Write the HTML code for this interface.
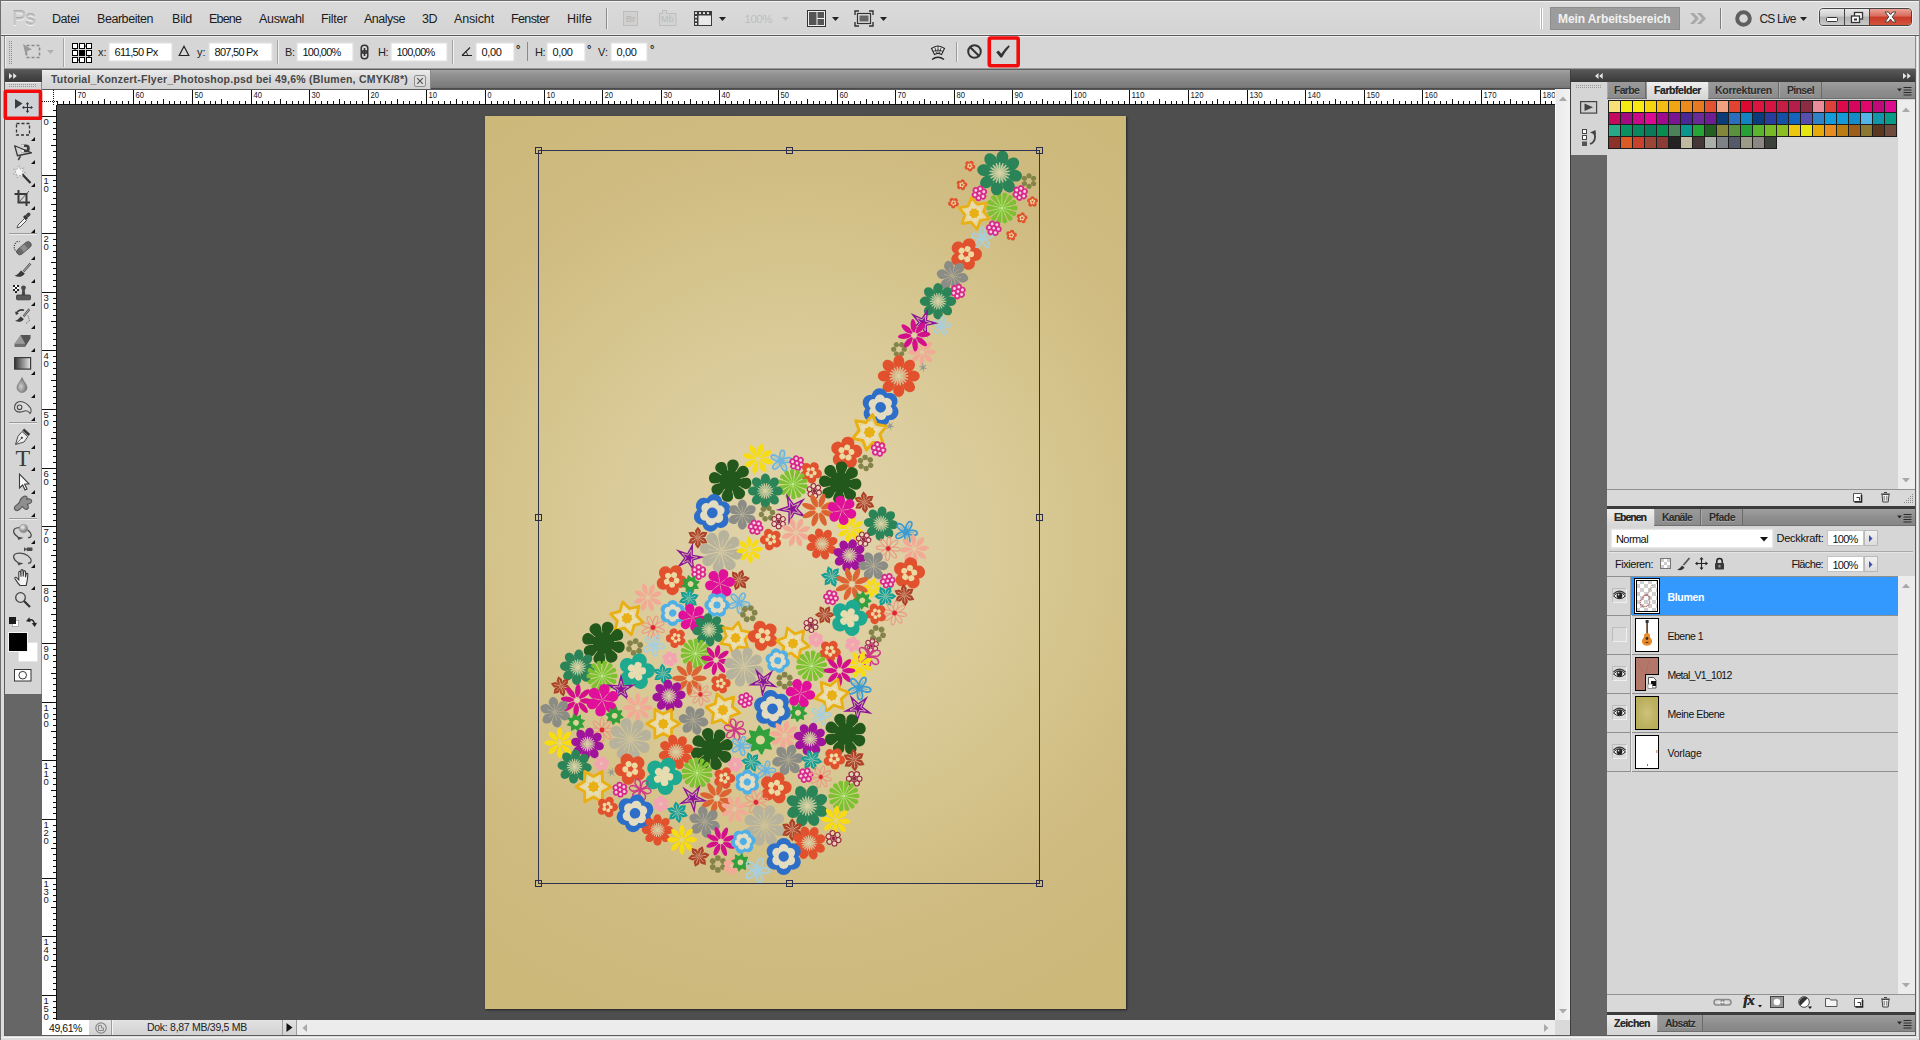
<!DOCTYPE html>
<html lang="de"><head><meta charset="utf-8"><title>Tutorial_Konzert-Flyer_Photoshop.psd</title>
<style>
html,body{margin:0;padding:0}
body{width:1920px;height:1040px;overflow:hidden;position:relative;background:#d6d6d6;font-family:"Liberation Sans",sans-serif}
body div,body svg,body span.t{position:absolute;display:block}
span.t{white-space:nowrap}
svg{overflow:visible}
</style></head><body>
<!-- chrome -->
<div style="left:0px;top:0px;width:1920px;height:1px;background:#6e6e6e"></div>
<div style="left:0px;top:1px;width:1920px;height:1px;background:#f2f2f2"></div>
<div style="left:1px;top:2px;width:1918px;height:32px;background:linear-gradient(#dadada,#d4d4d4)"></div>
<div style="left:0px;top:34px;width:1920px;height:1px;background:#e9e9e9"></div>
<div style="left:0px;top:35px;width:1920px;height:1px;background:#5a5a5a"></div>
<span class="t" style="left:12.00px;top:-2.78px;font-size:21px;line-height:42px;color:#c3c3c3;letter-spacing:-0.753px;text-shadow:0 1px 0 #f4f4f4,0 -1px 0 #a9a9a9;">Ps</span>
<span class="t" style="left:52.00px;top:6.97px;font-size:12.5px;line-height:25px;color:#1c1c1c;letter-spacing:-0.436px;">Datei</span>
<span class="t" style="left:97.00px;top:6.97px;font-size:12.5px;line-height:25px;color:#1c1c1c;letter-spacing:-0.446px;">Bearbeiten</span>
<span class="t" style="left:172.00px;top:6.97px;font-size:12.5px;line-height:25px;color:#1c1c1c;letter-spacing:-0.211px;">Bild</span>
<span class="t" style="left:209.00px;top:6.97px;font-size:12.5px;line-height:25px;color:#1c1c1c;letter-spacing:-0.829px;">Ebene</span>
<span class="t" style="left:259.00px;top:6.97px;font-size:12.5px;line-height:25px;color:#1c1c1c;letter-spacing:-0.321px;">Auswahl</span>
<span class="t" style="left:321.00px;top:6.97px;font-size:12.5px;line-height:25px;color:#1c1c1c;letter-spacing:-0.296px;">Filter</span>
<span class="t" style="left:364.00px;top:6.97px;font-size:12.5px;line-height:25px;color:#1c1c1c;letter-spacing:-0.496px;">Analyse</span>
<span class="t" style="left:422.00px;top:6.97px;font-size:12.5px;line-height:25px;color:#1c1c1c;letter-spacing:-0.490px;">3D</span>
<span class="t" style="left:454.00px;top:6.97px;font-size:12.5px;line-height:25px;color:#1c1c1c;letter-spacing:-0.142px;">Ansicht</span>
<span class="t" style="left:511.00px;top:6.97px;font-size:12.5px;line-height:25px;color:#1c1c1c;letter-spacing:-0.625px;">Fenster</span>
<span class="t" style="left:567.00px;top:6.97px;font-size:12.5px;line-height:25px;color:#1c1c1c;letter-spacing:-0.001px;">Hilfe</span>
<div style="left:606px;top:8px;width:1px;height:21px;background:#8a8a8a"></div>
<div style="left:607px;top:8px;width:1px;height:21px;background:#efefef"></div>
<div style="left:623px;top:11px;width:15px;height:15px;border:1px solid #bdbdbd;background:#d0d0d0;box-sizing:border-box"></div>
<span class="t" style="left:626.00px;top:11.05px;font-size:8.5px;line-height:17px;color:#b9b9b9;font-weight:bold;letter-spacing:-0.223px;">Br</span>
<svg style="left:658px;top:9px;" width="20" height="18" viewBox="0 0 20 18"><path d="M1.5 16.5V4.5h3v-3h4v3h9.5v12z" fill="#d3d3d3" stroke="#bdbdbd"/></svg>
<span class="t" style="left:661.00px;top:10.38px;font-size:9px;line-height:18px;color:#b9b9b9;letter-spacing:0.249px;">Mb</span>
<svg style="left:693px;top:10px;" width="20" height="17" viewBox="0 0 20 17"><rect x="1" y="1" width="18" height="15" fill="#3a3a3a"/><rect x="5.5" y="5.5" width="12.5" height="9.5" fill="#e9e9e9"/><g fill="#e9e9e9"><rect x="2" y="2.2" width="2" height="1.8"/><rect x="6" y="2.2" width="2" height="1.8"/><rect x="10" y="2.2" width="2" height="1.8"/><rect x="14" y="2.2" width="2" height="1.8"/><rect x="2" y="6" width="2" height="1.8"/><rect x="2" y="9.5" width="2" height="1.8"/><rect x="2" y="13" width="2" height="1.8"/></g></svg>
<svg style="left:719px;top:16.5px;" width="7" height="4" viewBox="0 0 7 4"><path d="M0 0h7 l-3.5 4z" fill="#222"/></svg>
<span class="t" style="left:744.50px;top:7.52px;font-size:11.5px;line-height:23px;color:#bdbdbd;letter-spacing:-0.478px;">100%</span>
<svg style="left:782px;top:16.5px;" width="7" height="4" viewBox="0 0 7 4"><path d="M0 0h7 l-3.5 4z" fill="#bdbdbd"/></svg>
<svg style="left:807px;top:10px;" width="19" height="17" viewBox="0 0 19 17"><rect x="0.5" y="0.5" width="18" height="16" fill="#f0f0f0" stroke="#333"/><rect x="2" y="2" width="7.5" height="13" fill="#555"/><rect x="10.5" y="2" width="6.5" height="6" fill="#555"/><rect x="10.5" y="9" width="6.5" height="6" fill="#555"/></svg>
<svg style="left:831.5px;top:16.5px;" width="7" height="4" viewBox="0 0 7 4"><path d="M0 0h7 l-3.5 4z" fill="#222"/></svg>
<svg style="left:854px;top:10px;" width="20" height="17" viewBox="0 0 20 17"><path d="M1 5V1h4M15 1h4v4M19 12v4h-4M5 16H1v-4" fill="none" stroke="#333" stroke-width="1.4"/><rect x="3.5" y="3.5" width="13" height="10" fill="#e0e0e0" stroke="#333" stroke-width="1.2"/><rect x="5.5" y="5.5" width="9" height="6" fill="#666"/></svg>
<svg style="left:879.5px;top:16.5px;" width="7" height="4" viewBox="0 0 7 4"><path d="M0 0h7 l-3.5 4z" fill="#222"/></svg>
<div style="left:1540px;top:8px;width:1px;height:21px;background:#fff"></div>
<div style="left:1542px;top:8px;width:1px;height:21px;background:#fff"></div>
<div style="left:1541px;top:8px;width:1px;height:21px;background:#b5b5b5"></div>
<div style="left:1550px;top:7px;width:130px;height:23px;background:#9c9c9c;border:1px solid #8c8c8c;box-sizing:border-box"></div>
<span class="t" style="left:1558.00px;top:6.84px;font-size:12px;line-height:24px;color:#f1f1f1;font-weight:bold;letter-spacing:-0.092px;">Mein Arbeitsbereich</span>
<svg style="left:1689px;top:12px;" width="18" height="13" viewBox="0 0 18 13"><path d="M1 1h4l5 5.5-5 5.5H1l5-5.5zM8 1h4l5 5.5-5 5.5H8l5-5.5z" fill="#a9a9a9"/></svg>
<div style="left:1720px;top:8px;width:1px;height:21px;background:#7d7d7d"></div>
<div style="left:1721px;top:8px;width:1px;height:21px;background:#efefef"></div>
<svg style="left:1734px;top:9px;" width="19" height="19" viewBox="0 0 19 19"><circle cx="9.5" cy="9.5" r="6.3" fill="none" stroke="#5e5e5e" stroke-width="4"/></svg>
<span class="t" style="left:1759.50px;top:6.84px;font-size:12px;line-height:24px;color:#222;letter-spacing:-0.860px;">CS Live</span>
<svg style="left:1800px;top:17px;" width="7" height="4" viewBox="0 0 7 4"><path d="M0 0h7 l-3.5 4z" fill="#222"/></svg>
<div style="left:1819px;top:8px;width:93px;height:18px;border-radius:4px;border:1px solid #454545;box-sizing:border-box;overflow:hidden;box-shadow:0 0 0 1px rgba(255,255,255,.55)"><div style="left:0;top:0;width:24px;height:16px;background:linear-gradient(#e8e8e8,#cfcfcf 45%,#b2b2b2 50%,#c9c9c9)"></div><div style="left:24px;top:0;width:1px;height:16px;background:#454545"></div><div style="left:25px;top:0;width:24px;height:16px;background:linear-gradient(#e8e8e8,#cfcfcf 45%,#b2b2b2 50%,#c9c9c9)"></div><div style="left:49px;top:0;width:1px;height:16px;background:#454545"></div><div style="left:50px;top:0;width:42px;height:16px;background:linear-gradient(#e9a396,#d9695a 45%,#c73a26 50%,#d4553f)"></div></div>
<svg style="left:1826px;top:17px;" width="12" height="6" viewBox="0 0 12 6"><rect x="0.5" y="0.5" width="11" height="4" rx="1" fill="#fff" stroke="#333"/></svg>
<svg style="left:1850px;top:11px;" width="14" height="13" viewBox="0 0 14 13"><rect x="4.5" y="1.5" width="8" height="6.5" fill="#fff" stroke="#333" stroke-width="1.3"/><rect x="1.5" y="5" width="8" height="6.5" fill="#fff" stroke="#333" stroke-width="1.3"/><rect x="4" y="7.5" width="3" height="2" fill="#333"/></svg>
<svg style="left:1884px;top:11px;" width="13" height="12" viewBox="0 0 13 12"><path d="M1 1h3.3l2.2 2.8L8.7 1H12L8.2 5.8 12 11H8.7L6.5 8 4.3 11H1l3.8-5.2z" fill="#fff" stroke="#444" stroke-width="1"/></svg>
<div style="left:1px;top:36px;width:1918px;height:33px;background:#d6d6d6"></div>
<div style="left:4px;top:36px;width:1px;height:33px;background:#8e8e8e"></div>
<div style="left:5px;top:36px;width:1911px;height:1px;background:#f0f0f0"></div>
<div style="left:5px;top:37px;width:1px;height:31px;background:#f0f0f0"></div>
<div style="left:1915px;top:36px;width:1px;height:33px;background:#8e8e8e"></div>
<div style="left:4px;top:68px;width:1912px;height:1px;background:#9a9a9a"></div>
<svg style="left:9px;top:41px;" width="4" height="24" viewBox="0 0 4 24"><rect x="0" y="0" width="1" height="1" fill="#8d8d8d"/><rect x="2" y="0" width="1" height="1" fill="#8d8d8d"/><rect x="0" y="2" width="1" height="1" fill="#8d8d8d"/><rect x="2" y="2" width="1" height="1" fill="#8d8d8d"/><rect x="0" y="4" width="1" height="1" fill="#8d8d8d"/><rect x="2" y="4" width="1" height="1" fill="#8d8d8d"/><rect x="0" y="6" width="1" height="1" fill="#8d8d8d"/><rect x="2" y="6" width="1" height="1" fill="#8d8d8d"/><rect x="0" y="8" width="1" height="1" fill="#8d8d8d"/><rect x="2" y="8" width="1" height="1" fill="#8d8d8d"/><rect x="0" y="10" width="1" height="1" fill="#8d8d8d"/><rect x="2" y="10" width="1" height="1" fill="#8d8d8d"/><rect x="0" y="12" width="1" height="1" fill="#8d8d8d"/><rect x="2" y="12" width="1" height="1" fill="#8d8d8d"/><rect x="0" y="14" width="1" height="1" fill="#8d8d8d"/><rect x="2" y="14" width="1" height="1" fill="#8d8d8d"/><rect x="0" y="16" width="1" height="1" fill="#8d8d8d"/><rect x="2" y="16" width="1" height="1" fill="#8d8d8d"/><rect x="0" y="18" width="1" height="1" fill="#8d8d8d"/><rect x="2" y="18" width="1" height="1" fill="#8d8d8d"/><rect x="0" y="20" width="1" height="1" fill="#8d8d8d"/><rect x="2" y="20" width="1" height="1" fill="#8d8d8d"/><rect x="0" y="22" width="1" height="1" fill="#8d8d8d"/><rect x="2" y="22" width="1" height="1" fill="#8d8d8d"/></svg>
<svg style="left:22px;top:43px;" width="20" height="18" viewBox="0 0 20 18"><rect x="4.5" y="2.5" width="13" height="12" fill="none" stroke="#8a8a8a" stroke-width="1.6" stroke-dasharray="3 2"/><path d="M1 1l9 5.5-4.2 1.2L3.5 12z" fill="#9a9a9a"/></svg>
<svg style="left:47px;top:50px;" width="7" height="4" viewBox="0 0 7 4"><path d="M0 0h7 l-3.5 4z" fill="#b0b0b0"/></svg>
<div style="left:63px;top:38px;width:1px;height:29px;background:#a4a4a4"></div>
<div style="left:64px;top:38px;width:1px;height:29px;background:#f0f0f0"></div>
<svg style="left:72px;top:43px;" width="20" height="20" viewBox="0 0 20 20"><path d="M3 3h14v14H3z" fill="none" stroke="#000" stroke-width="1" stroke-dasharray="1 1"/><rect x="0.5" y="0.5" width="5" height="5" fill="#fff" stroke="#000"/><rect x="7.5" y="0.5" width="5" height="5" fill="#fff" stroke="#000"/><rect x="14.5" y="0.5" width="5" height="5" fill="#fff" stroke="#000"/><rect x="0.5" y="7.5" width="5" height="5" fill="#fff" stroke="#000"/><rect x="7.5" y="7.5" width="5" height="5" fill="#000" stroke="#000"/><rect x="14.5" y="7.5" width="5" height="5" fill="#fff" stroke="#000"/><rect x="0.5" y="14.5" width="5" height="5" fill="#fff" stroke="#000"/><rect x="7.5" y="14.5" width="5" height="5" fill="#fff" stroke="#000"/><rect x="14.5" y="14.5" width="5" height="5" fill="#fff" stroke="#000"/></svg>
<span class="t" style="left:98.00px;top:41.19px;font-size:11px;line-height:22px;color:#222;letter-spacing:-0.028px;">x:</span>
<div style="left:110px;top:44px;width:61px;height:16px;background:#fff;box-shadow:0 0 1.5px 1px #f4f4f4"></div><span class="t" style="left:114.50px;top:41.19px;font-size:11px;line-height:22px;color:#111;letter-spacing:-0.636px;">611,50 Px</span>
<svg style="left:178px;top:45px;" width="12" height="12" viewBox="0 0 12 12"><path d="M6 1.2L10.8 10.5H1.2z" fill="none" stroke="#222" stroke-width="1.2"/></svg>
<span class="t" style="left:197.00px;top:41.19px;font-size:11px;line-height:22px;color:#222;letter-spacing:-0.028px;">y:</span>
<div style="left:210px;top:44px;width:61px;height:16px;background:#fff;box-shadow:0 0 1.5px 1px #f4f4f4"></div><span class="t" style="left:214.50px;top:41.19px;font-size:11px;line-height:22px;color:#111;letter-spacing:-0.726px;">807,50 Px</span>
<div style="left:277px;top:40px;width:1px;height:24px;background:#a4a4a4"></div>
<div style="left:278px;top:40px;width:1px;height:24px;background:#f0f0f0"></div>
<span class="t" style="left:285.00px;top:41.19px;font-size:11px;line-height:22px;color:#222;letter-spacing:-0.447px;">B:</span>
<div style="left:298px;top:44px;width:54px;height:16px;background:#fff;box-shadow:0 0 1.5px 1px #f4f4f4"></div><span class="t" style="left:302.50px;top:41.19px;font-size:11px;line-height:22px;color:#111;letter-spacing:-0.775px;">100,00%</span>
<svg style="left:360px;top:44px;" width="9" height="16" viewBox="0 0 9 16"><rect x="1.2" y="1.2" width="6.6" height="8" rx="3" fill="none" stroke="#333" stroke-width="1.5"/><rect x="1.2" y="6.8" width="6.6" height="8" rx="3" fill="none" stroke="#333" stroke-width="1.5"/><rect x="3.7" y="4" width="1.6" height="8" fill="#333"/></svg>
<span class="t" style="left:378.00px;top:41.19px;font-size:11px;line-height:22px;color:#222;letter-spacing:-0.500px;">H:</span>
<div style="left:392px;top:44px;width:54px;height:16px;background:#fff;box-shadow:0 0 1.5px 1px #f4f4f4"></div><span class="t" style="left:396.50px;top:41.19px;font-size:11px;line-height:22px;color:#111;letter-spacing:-0.775px;">100,00%</span>
<div style="left:452px;top:40px;width:1px;height:24px;background:#a4a4a4"></div>
<div style="left:453px;top:40px;width:1px;height:24px;background:#f0f0f0"></div>
<svg style="left:461px;top:46px;" width="12" height="11" viewBox="0 0 12 11"><path d="M1 9.5h10M1 9.5L9 1.5" fill="none" stroke="#222" stroke-width="1.1"/><path d="M6.5 9.5A5 5 0 0 0 5 5.8" fill="none" stroke="#222" stroke-width=".9"/></svg>
<div style="left:477px;top:44px;width:36px;height:16px;background:#fff;box-shadow:0 0 1.5px 1px #f4f4f4"></div><span class="t" style="left:481.50px;top:41.19px;font-size:11px;line-height:22px;color:#111;letter-spacing:-0.352px;">0,00</span>
<span class="t" style="left:516.00px;top:38.19px;font-size:11px;line-height:22px;color:#222;font-weight:bold;">°</span>
<div style="left:527px;top:42px;width:1px;height:19px;background:#8a8a8a"></div>
<span class="t" style="left:535.00px;top:41.19px;font-size:11px;line-height:22px;color:#222;letter-spacing:-0.500px;">H:</span>
<div style="left:548px;top:44px;width:36px;height:16px;background:#fff;box-shadow:0 0 1.5px 1px #f4f4f4"></div><span class="t" style="left:552.50px;top:41.19px;font-size:11px;line-height:22px;color:#111;letter-spacing:-0.352px;">0,00</span>
<span class="t" style="left:587.00px;top:38.19px;font-size:11px;line-height:22px;color:#222;font-weight:bold;">°</span>
<span class="t" style="left:598.00px;top:41.19px;font-size:11px;line-height:22px;color:#222;letter-spacing:0.008px;">V:</span>
<div style="left:612px;top:44px;width:34px;height:16px;background:#fff;box-shadow:0 0 1.5px 1px #f4f4f4"></div><span class="t" style="left:616.50px;top:41.19px;font-size:11px;line-height:22px;color:#111;letter-spacing:-0.352px;">0,00</span>
<span class="t" style="left:650.00px;top:38.19px;font-size:11px;line-height:22px;color:#222;font-weight:bold;">°</span>
<svg style="left:929px;top:43px;" width="18" height="18" viewBox="0 0 18 18"><path d="M2.5 5.5Q9 0.5 15.5 5.5L12.5 11.5Q9 9.5 5.5 11.5z" fill="#e9e9e9" stroke="#222" stroke-width="1.1"/><path d="M9 3v7.5M5.8 4.2L7.6 10.6M12.2 4.2L10.4 10.6M4 8.3Q9 5.6 14 8.3" fill="none" stroke="#222" stroke-width=".8"/><path d="M3 16.5Q9 12 15 16.5" fill="none" stroke="#222" stroke-width="1.5"/></svg>
<div style="left:956px;top:42px;width:1px;height:20px;background:#9a9a9a"></div>
<div style="left:957px;top:42px;width:1px;height:20px;background:#f0f0f0"></div>
<svg style="left:966px;top:43px;" width="17" height="17" viewBox="0 0 17 17"><circle cx="8.5" cy="8.5" r="6.3" fill="none" stroke="#333" stroke-width="2"/><path d="M4.2 4.2L12.8 12.8" stroke="#333" stroke-width="2"/></svg>
<svg style="left:995px;top:44px;" width="16" height="15" viewBox="0 0 16 15"><path d="M1.2 8.2L3.6 6.4 6.3 9.8Q9.5 4.6 13.6 1.2L14.8 2.6Q10.3 7.6 7 13.6H5.5z" fill="#333"/></svg>
<svg style="left:0px;top:0px;" width="1920" height="80" viewBox="0 0 1920 80"><rect x="989.300" y="38" width="28.900" height="27.700" rx="1.500" fill="none" stroke="#f00c0c" stroke-width="3.600"/></svg>
<!-- doc -->
<div style="left:0px;top:69px;width:1920px;height:1px;background:#5c5c5c"></div>
<div style="left:42px;top:70px;width:1528px;height:19px;background:linear-gradient(#a3a3a3,#939393 20%,#7c7c7c 85%,#6c6c6c)"></div>
<div style="left:42px;top:88px;width:1528px;height:1px;background:#4a4a4a"></div>
<div style="left:42px;top:70px;width:389px;height:19px;background:linear-gradient(#ececec,#dcdcdc 40%,#d3d3d3);border-right:1px solid #8a8a8a;box-sizing:border-box"></div>
<span class="t" style="left:51.00px;top:69.36px;font-size:10.5px;line-height:21px;color:#474747;font-weight:bold;letter-spacing:0.230px;">Tutorial_Konzert-Flyer_Photoshop.psd bei 49,6% (Blumen, CMYK/8*)</span>
<svg style="left:414px;top:75px;" width="12" height="12" viewBox="0 0 12 12"><rect x=".5" y=".5" width="11" height="11" rx="1.5" fill="#dedede" stroke="#8e8e8e"/><path d="M3.2 3.2l5.6 5.6M8.8 3.2l-5.6 5.6" stroke="#555" stroke-width="1.2"/></svg>
<div style="left:42px;top:89px;width:1513px;height:931px;background:#4e4e4e"></div>
<div style="left:42px;top:89px;width:1513px;height:16px;background:#fff"></div>
<div style="left:42px;top:89px;width:15px;height:931px;background:#fff"></div>
<div style="left:42px;top:89px;width:1513px;height:1px;background:#5a5a5a"></div>
<svg style="left:0;top:89px;" width="1555" height="16" viewBox="0 0 1555 16"><defs><clipPath id="rc"><rect x="57" y="0" width="1498" height="16"/></clipPath></defs><g clip-path="url(#rc)"><rect x="57" y="12" width="1" height="3" fill="#111"/><rect x="63" y="12" width="1" height="3" fill="#111"/><rect x="69" y="12" width="1" height="3" fill="#111"/><rect x="75" y="1" width="1" height="15" fill="#111"/><rect x="81" y="12" width="1" height="3" fill="#111"/><rect x="87" y="12" width="1" height="3" fill="#111"/><rect x="92" y="12" width="1" height="3" fill="#111"/><rect x="98" y="12" width="1" height="3" fill="#111"/><rect x="104" y="10" width="1" height="5" fill="#111"/><rect x="110" y="12" width="1" height="3" fill="#111"/><rect x="116" y="12" width="1" height="3" fill="#111"/><rect x="122" y="12" width="1" height="3" fill="#111"/><rect x="128" y="12" width="1" height="3" fill="#111"/><rect x="133" y="1" width="1" height="15" fill="#111"/><rect x="139" y="12" width="1" height="3" fill="#111"/><rect x="145" y="12" width="1" height="3" fill="#111"/><rect x="151" y="12" width="1" height="3" fill="#111"/><rect x="157" y="12" width="1" height="3" fill="#111"/><rect x="163" y="10" width="1" height="5" fill="#111"/><rect x="169" y="12" width="1" height="3" fill="#111"/><rect x="174" y="12" width="1" height="3" fill="#111"/><rect x="180" y="12" width="1" height="3" fill="#111"/><rect x="186" y="12" width="1" height="3" fill="#111"/><rect x="192" y="1" width="1" height="15" fill="#111"/><rect x="198" y="12" width="1" height="3" fill="#111"/><rect x="204" y="12" width="1" height="3" fill="#111"/><rect x="210" y="12" width="1" height="3" fill="#111"/><rect x="215" y="12" width="1" height="3" fill="#111"/><rect x="221" y="10" width="1" height="5" fill="#111"/><rect x="227" y="12" width="1" height="3" fill="#111"/><rect x="233" y="12" width="1" height="3" fill="#111"/><rect x="239" y="12" width="1" height="3" fill="#111"/><rect x="245" y="12" width="1" height="3" fill="#111"/><rect x="251" y="1" width="1" height="15" fill="#111"/><rect x="256" y="12" width="1" height="3" fill="#111"/><rect x="262" y="12" width="1" height="3" fill="#111"/><rect x="268" y="12" width="1" height="3" fill="#111"/><rect x="274" y="12" width="1" height="3" fill="#111"/><rect x="280" y="10" width="1" height="5" fill="#111"/><rect x="286" y="12" width="1" height="3" fill="#111"/><rect x="292" y="12" width="1" height="3" fill="#111"/><rect x="298" y="12" width="1" height="3" fill="#111"/><rect x="303" y="12" width="1" height="3" fill="#111"/><rect x="309" y="1" width="1" height="15" fill="#111"/><rect x="315" y="12" width="1" height="3" fill="#111"/><rect x="321" y="12" width="1" height="3" fill="#111"/><rect x="327" y="12" width="1" height="3" fill="#111"/><rect x="333" y="12" width="1" height="3" fill="#111"/><rect x="339" y="10" width="1" height="5" fill="#111"/><rect x="344" y="12" width="1" height="3" fill="#111"/><rect x="350" y="12" width="1" height="3" fill="#111"/><rect x="356" y="12" width="1" height="3" fill="#111"/><rect x="362" y="12" width="1" height="3" fill="#111"/><rect x="368" y="1" width="1" height="15" fill="#111"/><rect x="374" y="12" width="1" height="3" fill="#111"/><rect x="380" y="12" width="1" height="3" fill="#111"/><rect x="385" y="12" width="1" height="3" fill="#111"/><rect x="391" y="12" width="1" height="3" fill="#111"/><rect x="397" y="10" width="1" height="5" fill="#111"/><rect x="403" y="12" width="1" height="3" fill="#111"/><rect x="409" y="12" width="1" height="3" fill="#111"/><rect x="415" y="12" width="1" height="3" fill="#111"/><rect x="421" y="12" width="1" height="3" fill="#111"/><rect x="426" y="1" width="1" height="15" fill="#111"/><rect x="432" y="12" width="1" height="3" fill="#111"/><rect x="438" y="12" width="1" height="3" fill="#111"/><rect x="444" y="12" width="1" height="3" fill="#111"/><rect x="450" y="12" width="1" height="3" fill="#111"/><rect x="456" y="10" width="1" height="5" fill="#111"/><rect x="462" y="12" width="1" height="3" fill="#111"/><rect x="467" y="12" width="1" height="3" fill="#111"/><rect x="473" y="12" width="1" height="3" fill="#111"/><rect x="479" y="12" width="1" height="3" fill="#111"/><rect x="485" y="1" width="1" height="15" fill="#111"/><rect x="491" y="12" width="1" height="3" fill="#111"/><rect x="497" y="12" width="1" height="3" fill="#111"/><rect x="503" y="12" width="1" height="3" fill="#111"/><rect x="508" y="12" width="1" height="3" fill="#111"/><rect x="514" y="10" width="1" height="5" fill="#111"/><rect x="520" y="12" width="1" height="3" fill="#111"/><rect x="526" y="12" width="1" height="3" fill="#111"/><rect x="532" y="12" width="1" height="3" fill="#111"/><rect x="538" y="12" width="1" height="3" fill="#111"/><rect x="544" y="1" width="1" height="15" fill="#111"/><rect x="549" y="12" width="1" height="3" fill="#111"/><rect x="555" y="12" width="1" height="3" fill="#111"/><rect x="561" y="12" width="1" height="3" fill="#111"/><rect x="567" y="12" width="1" height="3" fill="#111"/><rect x="573" y="10" width="1" height="5" fill="#111"/><rect x="579" y="12" width="1" height="3" fill="#111"/><rect x="585" y="12" width="1" height="3" fill="#111"/><rect x="590" y="12" width="1" height="3" fill="#111"/><rect x="596" y="12" width="1" height="3" fill="#111"/><rect x="602" y="1" width="1" height="15" fill="#111"/><rect x="608" y="12" width="1" height="3" fill="#111"/><rect x="614" y="12" width="1" height="3" fill="#111"/><rect x="620" y="12" width="1" height="3" fill="#111"/><rect x="626" y="12" width="1" height="3" fill="#111"/><rect x="631" y="10" width="1" height="5" fill="#111"/><rect x="637" y="12" width="1" height="3" fill="#111"/><rect x="643" y="12" width="1" height="3" fill="#111"/><rect x="649" y="12" width="1" height="3" fill="#111"/><rect x="655" y="12" width="1" height="3" fill="#111"/><rect x="661" y="1" width="1" height="15" fill="#111"/><rect x="667" y="12" width="1" height="3" fill="#111"/><rect x="672" y="12" width="1" height="3" fill="#111"/><rect x="678" y="12" width="1" height="3" fill="#111"/><rect x="684" y="12" width="1" height="3" fill="#111"/><rect x="690" y="10" width="1" height="5" fill="#111"/><rect x="696" y="12" width="1" height="3" fill="#111"/><rect x="702" y="12" width="1" height="3" fill="#111"/><rect x="708" y="12" width="1" height="3" fill="#111"/><rect x="714" y="12" width="1" height="3" fill="#111"/><rect x="719" y="1" width="1" height="15" fill="#111"/><rect x="725" y="12" width="1" height="3" fill="#111"/><rect x="731" y="12" width="1" height="3" fill="#111"/><rect x="737" y="12" width="1" height="3" fill="#111"/><rect x="743" y="12" width="1" height="3" fill="#111"/><rect x="749" y="10" width="1" height="5" fill="#111"/><rect x="755" y="12" width="1" height="3" fill="#111"/><rect x="760" y="12" width="1" height="3" fill="#111"/><rect x="766" y="12" width="1" height="3" fill="#111"/><rect x="772" y="12" width="1" height="3" fill="#111"/><rect x="778" y="1" width="1" height="15" fill="#111"/><rect x="784" y="12" width="1" height="3" fill="#111"/><rect x="790" y="12" width="1" height="3" fill="#111"/><rect x="796" y="12" width="1" height="3" fill="#111"/><rect x="801" y="12" width="1" height="3" fill="#111"/><rect x="807" y="10" width="1" height="5" fill="#111"/><rect x="813" y="12" width="1" height="3" fill="#111"/><rect x="819" y="12" width="1" height="3" fill="#111"/><rect x="825" y="12" width="1" height="3" fill="#111"/><rect x="831" y="12" width="1" height="3" fill="#111"/><rect x="837" y="1" width="1" height="15" fill="#111"/><rect x="842" y="12" width="1" height="3" fill="#111"/><rect x="848" y="12" width="1" height="3" fill="#111"/><rect x="854" y="12" width="1" height="3" fill="#111"/><rect x="860" y="12" width="1" height="3" fill="#111"/><rect x="866" y="10" width="1" height="5" fill="#111"/><rect x="872" y="12" width="1" height="3" fill="#111"/><rect x="878" y="12" width="1" height="3" fill="#111"/><rect x="883" y="12" width="1" height="3" fill="#111"/><rect x="889" y="12" width="1" height="3" fill="#111"/><rect x="895" y="1" width="1" height="15" fill="#111"/><rect x="901" y="12" width="1" height="3" fill="#111"/><rect x="907" y="12" width="1" height="3" fill="#111"/><rect x="913" y="12" width="1" height="3" fill="#111"/><rect x="919" y="12" width="1" height="3" fill="#111"/><rect x="924" y="10" width="1" height="5" fill="#111"/><rect x="930" y="12" width="1" height="3" fill="#111"/><rect x="936" y="12" width="1" height="3" fill="#111"/><rect x="942" y="12" width="1" height="3" fill="#111"/><rect x="948" y="12" width="1" height="3" fill="#111"/><rect x="954" y="1" width="1" height="15" fill="#111"/><rect x="960" y="12" width="1" height="3" fill="#111"/><rect x="965" y="12" width="1" height="3" fill="#111"/><rect x="971" y="12" width="1" height="3" fill="#111"/><rect x="977" y="12" width="1" height="3" fill="#111"/><rect x="983" y="10" width="1" height="5" fill="#111"/><rect x="989" y="12" width="1" height="3" fill="#111"/><rect x="995" y="12" width="1" height="3" fill="#111"/><rect x="1001" y="12" width="1" height="3" fill="#111"/><rect x="1006" y="12" width="1" height="3" fill="#111"/><rect x="1012" y="1" width="1" height="15" fill="#111"/><rect x="1018" y="12" width="1" height="3" fill="#111"/><rect x="1024" y="12" width="1" height="3" fill="#111"/><rect x="1030" y="12" width="1" height="3" fill="#111"/><rect x="1036" y="12" width="1" height="3" fill="#111"/><rect x="1042" y="10" width="1" height="5" fill="#111"/><rect x="1047" y="12" width="1" height="3" fill="#111"/><rect x="1053" y="12" width="1" height="3" fill="#111"/><rect x="1059" y="12" width="1" height="3" fill="#111"/><rect x="1065" y="12" width="1" height="3" fill="#111"/><rect x="1071" y="1" width="1" height="15" fill="#111"/><rect x="1077" y="12" width="1" height="3" fill="#111"/><rect x="1083" y="12" width="1" height="3" fill="#111"/><rect x="1088" y="12" width="1" height="3" fill="#111"/><rect x="1094" y="12" width="1" height="3" fill="#111"/><rect x="1100" y="10" width="1" height="5" fill="#111"/><rect x="1106" y="12" width="1" height="3" fill="#111"/><rect x="1112" y="12" width="1" height="3" fill="#111"/><rect x="1118" y="12" width="1" height="3" fill="#111"/><rect x="1124" y="12" width="1" height="3" fill="#111"/><rect x="1129" y="1" width="1" height="15" fill="#111"/><rect x="1135" y="12" width="1" height="3" fill="#111"/><rect x="1141" y="12" width="1" height="3" fill="#111"/><rect x="1147" y="12" width="1" height="3" fill="#111"/><rect x="1153" y="12" width="1" height="3" fill="#111"/><rect x="1159" y="10" width="1" height="5" fill="#111"/><rect x="1165" y="12" width="1" height="3" fill="#111"/><rect x="1171" y="12" width="1" height="3" fill="#111"/><rect x="1176" y="12" width="1" height="3" fill="#111"/><rect x="1182" y="12" width="1" height="3" fill="#111"/><rect x="1188" y="1" width="1" height="15" fill="#111"/><rect x="1194" y="12" width="1" height="3" fill="#111"/><rect x="1200" y="12" width="1" height="3" fill="#111"/><rect x="1206" y="12" width="1" height="3" fill="#111"/><rect x="1212" y="12" width="1" height="3" fill="#111"/><rect x="1217" y="10" width="1" height="5" fill="#111"/><rect x="1223" y="12" width="1" height="3" fill="#111"/><rect x="1229" y="12" width="1" height="3" fill="#111"/><rect x="1235" y="12" width="1" height="3" fill="#111"/><rect x="1241" y="12" width="1" height="3" fill="#111"/><rect x="1247" y="1" width="1" height="15" fill="#111"/><rect x="1253" y="12" width="1" height="3" fill="#111"/><rect x="1258" y="12" width="1" height="3" fill="#111"/><rect x="1264" y="12" width="1" height="3" fill="#111"/><rect x="1270" y="12" width="1" height="3" fill="#111"/><rect x="1276" y="10" width="1" height="5" fill="#111"/><rect x="1282" y="12" width="1" height="3" fill="#111"/><rect x="1288" y="12" width="1" height="3" fill="#111"/><rect x="1294" y="12" width="1" height="3" fill="#111"/><rect x="1299" y="12" width="1" height="3" fill="#111"/><rect x="1305" y="1" width="1" height="15" fill="#111"/><rect x="1311" y="12" width="1" height="3" fill="#111"/><rect x="1317" y="12" width="1" height="3" fill="#111"/><rect x="1323" y="12" width="1" height="3" fill="#111"/><rect x="1329" y="12" width="1" height="3" fill="#111"/><rect x="1335" y="10" width="1" height="5" fill="#111"/><rect x="1340" y="12" width="1" height="3" fill="#111"/><rect x="1346" y="12" width="1" height="3" fill="#111"/><rect x="1352" y="12" width="1" height="3" fill="#111"/><rect x="1358" y="12" width="1" height="3" fill="#111"/><rect x="1364" y="1" width="1" height="15" fill="#111"/><rect x="1370" y="12" width="1" height="3" fill="#111"/><rect x="1376" y="12" width="1" height="3" fill="#111"/><rect x="1381" y="12" width="1" height="3" fill="#111"/><rect x="1387" y="12" width="1" height="3" fill="#111"/><rect x="1393" y="10" width="1" height="5" fill="#111"/><rect x="1399" y="12" width="1" height="3" fill="#111"/><rect x="1405" y="12" width="1" height="3" fill="#111"/><rect x="1411" y="12" width="1" height="3" fill="#111"/><rect x="1417" y="12" width="1" height="3" fill="#111"/><rect x="1422" y="1" width="1" height="15" fill="#111"/><rect x="1428" y="12" width="1" height="3" fill="#111"/><rect x="1434" y="12" width="1" height="3" fill="#111"/><rect x="1440" y="12" width="1" height="3" fill="#111"/><rect x="1446" y="12" width="1" height="3" fill="#111"/><rect x="1452" y="10" width="1" height="5" fill="#111"/><rect x="1458" y="12" width="1" height="3" fill="#111"/><rect x="1463" y="12" width="1" height="3" fill="#111"/><rect x="1469" y="12" width="1" height="3" fill="#111"/><rect x="1475" y="12" width="1" height="3" fill="#111"/><rect x="1481" y="1" width="1" height="15" fill="#111"/><rect x="1487" y="12" width="1" height="3" fill="#111"/><rect x="1493" y="12" width="1" height="3" fill="#111"/><rect x="1499" y="12" width="1" height="3" fill="#111"/><rect x="1504" y="12" width="1" height="3" fill="#111"/><rect x="1510" y="10" width="1" height="5" fill="#111"/><rect x="1516" y="12" width="1" height="3" fill="#111"/><rect x="1522" y="12" width="1" height="3" fill="#111"/><rect x="1528" y="12" width="1" height="3" fill="#111"/><rect x="1534" y="12" width="1" height="3" fill="#111"/><rect x="1540" y="1" width="1" height="15" fill="#111"/><rect x="1545" y="12" width="1" height="3" fill="#111"/><rect x="1551" y="12" width="1" height="3" fill="#111"/><rect x="57" y="15" width="1498" height="1" fill="#111"/><text x="77.5" y="9" font-size="9.5" fill="#161626" font-family="Liberation Sans, sans-serif" textLength="8.5" lengthAdjust="spacingAndGlyphs">70</text><text x="135.5" y="9" font-size="9.5" fill="#161626" font-family="Liberation Sans, sans-serif" textLength="8.5" lengthAdjust="spacingAndGlyphs">60</text><text x="194.5" y="9" font-size="9.5" fill="#161626" font-family="Liberation Sans, sans-serif" textLength="8.5" lengthAdjust="spacingAndGlyphs">50</text><text x="253.5" y="9" font-size="9.5" fill="#161626" font-family="Liberation Sans, sans-serif" textLength="8.5" lengthAdjust="spacingAndGlyphs">40</text><text x="311.5" y="9" font-size="9.5" fill="#161626" font-family="Liberation Sans, sans-serif" textLength="8.5" lengthAdjust="spacingAndGlyphs">30</text><text x="370.5" y="9" font-size="9.5" fill="#161626" font-family="Liberation Sans, sans-serif" textLength="8.5" lengthAdjust="spacingAndGlyphs">20</text><text x="428.5" y="9" font-size="9.5" fill="#161626" font-family="Liberation Sans, sans-serif" textLength="8.5" lengthAdjust="spacingAndGlyphs">10</text><text x="487.5" y="9" font-size="9.5" fill="#161626" font-family="Liberation Sans, sans-serif" textLength="4" lengthAdjust="spacingAndGlyphs">0</text><text x="546.5" y="9" font-size="9.5" fill="#161626" font-family="Liberation Sans, sans-serif" textLength="8.5" lengthAdjust="spacingAndGlyphs">10</text><text x="604.5" y="9" font-size="9.5" fill="#161626" font-family="Liberation Sans, sans-serif" textLength="8.5" lengthAdjust="spacingAndGlyphs">20</text><text x="663.5" y="9" font-size="9.5" fill="#161626" font-family="Liberation Sans, sans-serif" textLength="8.5" lengthAdjust="spacingAndGlyphs">30</text><text x="721.5" y="9" font-size="9.5" fill="#161626" font-family="Liberation Sans, sans-serif" textLength="8.5" lengthAdjust="spacingAndGlyphs">40</text><text x="780.5" y="9" font-size="9.5" fill="#161626" font-family="Liberation Sans, sans-serif" textLength="8.5" lengthAdjust="spacingAndGlyphs">50</text><text x="839.5" y="9" font-size="9.5" fill="#161626" font-family="Liberation Sans, sans-serif" textLength="8.5" lengthAdjust="spacingAndGlyphs">60</text><text x="897.5" y="9" font-size="9.5" fill="#161626" font-family="Liberation Sans, sans-serif" textLength="8.5" lengthAdjust="spacingAndGlyphs">70</text><text x="956.5" y="9" font-size="9.5" fill="#161626" font-family="Liberation Sans, sans-serif" textLength="8.5" lengthAdjust="spacingAndGlyphs">80</text><text x="1014.5" y="9" font-size="9.5" fill="#161626" font-family="Liberation Sans, sans-serif" textLength="8.5" lengthAdjust="spacingAndGlyphs">90</text><text x="1073.5" y="9" font-size="9.5" fill="#161626" font-family="Liberation Sans, sans-serif" textLength="13" lengthAdjust="spacingAndGlyphs">100</text><text x="1131.5" y="9" font-size="9.5" fill="#161626" font-family="Liberation Sans, sans-serif" textLength="13" lengthAdjust="spacingAndGlyphs">110</text><text x="1190.5" y="9" font-size="9.5" fill="#161626" font-family="Liberation Sans, sans-serif" textLength="13" lengthAdjust="spacingAndGlyphs">120</text><text x="1249.5" y="9" font-size="9.5" fill="#161626" font-family="Liberation Sans, sans-serif" textLength="13" lengthAdjust="spacingAndGlyphs">130</text><text x="1307.5" y="9" font-size="9.5" fill="#161626" font-family="Liberation Sans, sans-serif" textLength="13" lengthAdjust="spacingAndGlyphs">140</text><text x="1366.5" y="9" font-size="9.5" fill="#161626" font-family="Liberation Sans, sans-serif" textLength="13" lengthAdjust="spacingAndGlyphs">150</text><text x="1424.5" y="9" font-size="9.5" fill="#161626" font-family="Liberation Sans, sans-serif" textLength="13" lengthAdjust="spacingAndGlyphs">160</text><text x="1483.5" y="9" font-size="9.5" fill="#161626" font-family="Liberation Sans, sans-serif" textLength="13" lengthAdjust="spacingAndGlyphs">170</text><text x="1542.5" y="9" font-size="9.5" fill="#161626" font-family="Liberation Sans, sans-serif" textLength="13" lengthAdjust="spacingAndGlyphs">180</text></g></svg>
<svg style="left:42px;top:0;" width="15" height="1020" viewBox="0 0 15 1020"><defs><clipPath id="rc2"><rect x="0" y="105" width="15" height="915"/></clipPath></defs><g clip-path="url(#rc2)"><rect x="11" y="110" width="3" height="1" fill="#111"/><rect x="0" y="116" width="15" height="1" fill="#111"/><rect x="11" y="122" width="3" height="1" fill="#111"/><rect x="11" y="128" width="3" height="1" fill="#111"/><rect x="11" y="134" width="3" height="1" fill="#111"/><rect x="11" y="139" width="3" height="1" fill="#111"/><rect x="9" y="145" width="5" height="1" fill="#111"/><rect x="11" y="151" width="3" height="1" fill="#111"/><rect x="11" y="157" width="3" height="1" fill="#111"/><rect x="11" y="163" width="3" height="1" fill="#111"/><rect x="11" y="169" width="3" height="1" fill="#111"/><rect x="0" y="175" width="15" height="1" fill="#111"/><rect x="11" y="180" width="3" height="1" fill="#111"/><rect x="11" y="186" width="3" height="1" fill="#111"/><rect x="11" y="192" width="3" height="1" fill="#111"/><rect x="11" y="198" width="3" height="1" fill="#111"/><rect x="9" y="204" width="5" height="1" fill="#111"/><rect x="11" y="210" width="3" height="1" fill="#111"/><rect x="11" y="216" width="3" height="1" fill="#111"/><rect x="11" y="221" width="3" height="1" fill="#111"/><rect x="11" y="227" width="3" height="1" fill="#111"/><rect x="0" y="233" width="15" height="1" fill="#111"/><rect x="11" y="239" width="3" height="1" fill="#111"/><rect x="11" y="245" width="3" height="1" fill="#111"/><rect x="11" y="251" width="3" height="1" fill="#111"/><rect x="11" y="257" width="3" height="1" fill="#111"/><rect x="9" y="262" width="5" height="1" fill="#111"/><rect x="11" y="268" width="3" height="1" fill="#111"/><rect x="11" y="274" width="3" height="1" fill="#111"/><rect x="11" y="280" width="3" height="1" fill="#111"/><rect x="11" y="286" width="3" height="1" fill="#111"/><rect x="0" y="292" width="15" height="1" fill="#111"/><rect x="11" y="298" width="3" height="1" fill="#111"/><rect x="11" y="303" width="3" height="1" fill="#111"/><rect x="11" y="309" width="3" height="1" fill="#111"/><rect x="11" y="315" width="3" height="1" fill="#111"/><rect x="9" y="321" width="5" height="1" fill="#111"/><rect x="11" y="327" width="3" height="1" fill="#111"/><rect x="11" y="333" width="3" height="1" fill="#111"/><rect x="11" y="339" width="3" height="1" fill="#111"/><rect x="11" y="345" width="3" height="1" fill="#111"/><rect x="0" y="350" width="15" height="1" fill="#111"/><rect x="11" y="356" width="3" height="1" fill="#111"/><rect x="11" y="362" width="3" height="1" fill="#111"/><rect x="11" y="368" width="3" height="1" fill="#111"/><rect x="11" y="374" width="3" height="1" fill="#111"/><rect x="9" y="380" width="5" height="1" fill="#111"/><rect x="11" y="386" width="3" height="1" fill="#111"/><rect x="11" y="391" width="3" height="1" fill="#111"/><rect x="11" y="397" width="3" height="1" fill="#111"/><rect x="11" y="403" width="3" height="1" fill="#111"/><rect x="0" y="409" width="15" height="1" fill="#111"/><rect x="11" y="415" width="3" height="1" fill="#111"/><rect x="11" y="421" width="3" height="1" fill="#111"/><rect x="11" y="427" width="3" height="1" fill="#111"/><rect x="11" y="432" width="3" height="1" fill="#111"/><rect x="9" y="438" width="5" height="1" fill="#111"/><rect x="11" y="444" width="3" height="1" fill="#111"/><rect x="11" y="450" width="3" height="1" fill="#111"/><rect x="11" y="456" width="3" height="1" fill="#111"/><rect x="11" y="462" width="3" height="1" fill="#111"/><rect x="0" y="468" width="15" height="1" fill="#111"/><rect x="11" y="473" width="3" height="1" fill="#111"/><rect x="11" y="479" width="3" height="1" fill="#111"/><rect x="11" y="485" width="3" height="1" fill="#111"/><rect x="11" y="491" width="3" height="1" fill="#111"/><rect x="9" y="497" width="5" height="1" fill="#111"/><rect x="11" y="503" width="3" height="1" fill="#111"/><rect x="11" y="509" width="3" height="1" fill="#111"/><rect x="11" y="514" width="3" height="1" fill="#111"/><rect x="11" y="520" width="3" height="1" fill="#111"/><rect x="0" y="526" width="15" height="1" fill="#111"/><rect x="11" y="532" width="3" height="1" fill="#111"/><rect x="11" y="538" width="3" height="1" fill="#111"/><rect x="11" y="544" width="3" height="1" fill="#111"/><rect x="11" y="550" width="3" height="1" fill="#111"/><rect x="9" y="555" width="5" height="1" fill="#111"/><rect x="11" y="561" width="3" height="1" fill="#111"/><rect x="11" y="567" width="3" height="1" fill="#111"/><rect x="11" y="573" width="3" height="1" fill="#111"/><rect x="11" y="579" width="3" height="1" fill="#111"/><rect x="0" y="585" width="15" height="1" fill="#111"/><rect x="11" y="591" width="3" height="1" fill="#111"/><rect x="11" y="596" width="3" height="1" fill="#111"/><rect x="11" y="602" width="3" height="1" fill="#111"/><rect x="11" y="608" width="3" height="1" fill="#111"/><rect x="9" y="614" width="5" height="1" fill="#111"/><rect x="11" y="620" width="3" height="1" fill="#111"/><rect x="11" y="626" width="3" height="1" fill="#111"/><rect x="11" y="632" width="3" height="1" fill="#111"/><rect x="11" y="637" width="3" height="1" fill="#111"/><rect x="0" y="643" width="15" height="1" fill="#111"/><rect x="11" y="649" width="3" height="1" fill="#111"/><rect x="11" y="655" width="3" height="1" fill="#111"/><rect x="11" y="661" width="3" height="1" fill="#111"/><rect x="11" y="667" width="3" height="1" fill="#111"/><rect x="9" y="673" width="5" height="1" fill="#111"/><rect x="11" y="678" width="3" height="1" fill="#111"/><rect x="11" y="684" width="3" height="1" fill="#111"/><rect x="11" y="690" width="3" height="1" fill="#111"/><rect x="11" y="696" width="3" height="1" fill="#111"/><rect x="0" y="702" width="15" height="1" fill="#111"/><rect x="11" y="708" width="3" height="1" fill="#111"/><rect x="11" y="714" width="3" height="1" fill="#111"/><rect x="11" y="719" width="3" height="1" fill="#111"/><rect x="11" y="725" width="3" height="1" fill="#111"/><rect x="9" y="731" width="5" height="1" fill="#111"/><rect x="11" y="737" width="3" height="1" fill="#111"/><rect x="11" y="743" width="3" height="1" fill="#111"/><rect x="11" y="749" width="3" height="1" fill="#111"/><rect x="11" y="755" width="3" height="1" fill="#111"/><rect x="0" y="760" width="15" height="1" fill="#111"/><rect x="11" y="766" width="3" height="1" fill="#111"/><rect x="11" y="772" width="3" height="1" fill="#111"/><rect x="11" y="778" width="3" height="1" fill="#111"/><rect x="11" y="784" width="3" height="1" fill="#111"/><rect x="9" y="790" width="5" height="1" fill="#111"/><rect x="11" y="796" width="3" height="1" fill="#111"/><rect x="11" y="802" width="3" height="1" fill="#111"/><rect x="11" y="807" width="3" height="1" fill="#111"/><rect x="11" y="813" width="3" height="1" fill="#111"/><rect x="0" y="819" width="15" height="1" fill="#111"/><rect x="11" y="825" width="3" height="1" fill="#111"/><rect x="11" y="831" width="3" height="1" fill="#111"/><rect x="11" y="837" width="3" height="1" fill="#111"/><rect x="11" y="843" width="3" height="1" fill="#111"/><rect x="9" y="848" width="5" height="1" fill="#111"/><rect x="11" y="854" width="3" height="1" fill="#111"/><rect x="11" y="860" width="3" height="1" fill="#111"/><rect x="11" y="866" width="3" height="1" fill="#111"/><rect x="11" y="872" width="3" height="1" fill="#111"/><rect x="0" y="878" width="15" height="1" fill="#111"/><rect x="11" y="884" width="3" height="1" fill="#111"/><rect x="11" y="889" width="3" height="1" fill="#111"/><rect x="11" y="895" width="3" height="1" fill="#111"/><rect x="11" y="901" width="3" height="1" fill="#111"/><rect x="9" y="907" width="5" height="1" fill="#111"/><rect x="11" y="913" width="3" height="1" fill="#111"/><rect x="11" y="919" width="3" height="1" fill="#111"/><rect x="11" y="925" width="3" height="1" fill="#111"/><rect x="11" y="930" width="3" height="1" fill="#111"/><rect x="0" y="936" width="15" height="1" fill="#111"/><rect x="11" y="942" width="3" height="1" fill="#111"/><rect x="11" y="948" width="3" height="1" fill="#111"/><rect x="11" y="954" width="3" height="1" fill="#111"/><rect x="11" y="960" width="3" height="1" fill="#111"/><rect x="9" y="966" width="5" height="1" fill="#111"/><rect x="11" y="971" width="3" height="1" fill="#111"/><rect x="11" y="977" width="3" height="1" fill="#111"/><rect x="11" y="983" width="3" height="1" fill="#111"/><rect x="11" y="989" width="3" height="1" fill="#111"/><rect x="0" y="995" width="15" height="1" fill="#111"/><rect x="11" y="1001" width="3" height="1" fill="#111"/><rect x="11" y="1007" width="3" height="1" fill="#111"/><rect x="11" y="1012" width="3" height="1" fill="#111"/><rect x="11" y="1018" width="3" height="1" fill="#111"/><rect x="14" y="105" width="1" height="915" fill="#111"/><text x="1.5" y="124.7" font-size="9.5" fill="#161626" font-family="Liberation Sans, sans-serif">0</text><text x="1.5" y="183.7" font-size="9.5" fill="#161626" font-family="Liberation Sans, sans-serif">1</text><text x="1.5" y="192" font-size="9.5" fill="#161626" font-family="Liberation Sans, sans-serif">0</text><text x="1.5" y="241.7" font-size="9.5" fill="#161626" font-family="Liberation Sans, sans-serif">2</text><text x="1.5" y="250" font-size="9.5" fill="#161626" font-family="Liberation Sans, sans-serif">0</text><text x="1.5" y="300.7" font-size="9.5" fill="#161626" font-family="Liberation Sans, sans-serif">3</text><text x="1.5" y="309" font-size="9.5" fill="#161626" font-family="Liberation Sans, sans-serif">0</text><text x="1.5" y="358.7" font-size="9.5" fill="#161626" font-family="Liberation Sans, sans-serif">4</text><text x="1.5" y="367" font-size="9.5" fill="#161626" font-family="Liberation Sans, sans-serif">0</text><text x="1.5" y="417.7" font-size="9.5" fill="#161626" font-family="Liberation Sans, sans-serif">5</text><text x="1.5" y="426" font-size="9.5" fill="#161626" font-family="Liberation Sans, sans-serif">0</text><text x="1.5" y="476.7" font-size="9.5" fill="#161626" font-family="Liberation Sans, sans-serif">6</text><text x="1.5" y="485" font-size="9.5" fill="#161626" font-family="Liberation Sans, sans-serif">0</text><text x="1.5" y="534.7" font-size="9.5" fill="#161626" font-family="Liberation Sans, sans-serif">7</text><text x="1.5" y="543" font-size="9.5" fill="#161626" font-family="Liberation Sans, sans-serif">0</text><text x="1.5" y="593.7" font-size="9.5" fill="#161626" font-family="Liberation Sans, sans-serif">8</text><text x="1.5" y="602" font-size="9.5" fill="#161626" font-family="Liberation Sans, sans-serif">0</text><text x="1.5" y="651.7" font-size="9.5" fill="#161626" font-family="Liberation Sans, sans-serif">9</text><text x="1.5" y="660" font-size="9.5" fill="#161626" font-family="Liberation Sans, sans-serif">0</text><text x="1.5" y="710.7" font-size="9.5" fill="#161626" font-family="Liberation Sans, sans-serif">1</text><text x="1.5" y="719" font-size="9.5" fill="#161626" font-family="Liberation Sans, sans-serif">0</text><text x="1.5" y="727.3" font-size="9.5" fill="#161626" font-family="Liberation Sans, sans-serif">0</text><text x="1.5" y="768.7" font-size="9.5" fill="#161626" font-family="Liberation Sans, sans-serif">1</text><text x="1.5" y="777" font-size="9.5" fill="#161626" font-family="Liberation Sans, sans-serif">1</text><text x="1.5" y="785.3" font-size="9.5" fill="#161626" font-family="Liberation Sans, sans-serif">0</text><text x="1.5" y="827.7" font-size="9.5" fill="#161626" font-family="Liberation Sans, sans-serif">1</text><text x="1.5" y="836" font-size="9.5" fill="#161626" font-family="Liberation Sans, sans-serif">2</text><text x="1.5" y="844.3" font-size="9.5" fill="#161626" font-family="Liberation Sans, sans-serif">0</text><text x="1.5" y="886.7" font-size="9.5" fill="#161626" font-family="Liberation Sans, sans-serif">1</text><text x="1.5" y="895" font-size="9.5" fill="#161626" font-family="Liberation Sans, sans-serif">3</text><text x="1.5" y="903.3" font-size="9.5" fill="#161626" font-family="Liberation Sans, sans-serif">0</text><text x="1.5" y="944.7" font-size="9.5" fill="#161626" font-family="Liberation Sans, sans-serif">1</text><text x="1.5" y="953" font-size="9.5" fill="#161626" font-family="Liberation Sans, sans-serif">4</text><text x="1.5" y="961.3" font-size="9.5" fill="#161626" font-family="Liberation Sans, sans-serif">0</text><text x="1.5" y="1003.7" font-size="9.5" fill="#161626" font-family="Liberation Sans, sans-serif">1</text><text x="1.5" y="1012" font-size="9.5" fill="#161626" font-family="Liberation Sans, sans-serif">5</text><text x="1.5" y="1020.3" font-size="9.5" fill="#161626" font-family="Liberation Sans, sans-serif">0</text></g></svg>
<div style="left:42px;top:90px;width:15px;height:15px;background:#fff"></div>
<svg style="left:42px;top:90px;" width="15" height="15" viewBox="0 0 15 15"><path d="M0 11.5h15M11.5 0v15" stroke="#111" stroke-width="1" stroke-dasharray="1 1" fill="none"/></svg>
<div style="left:1555px;top:89px;width:15px;height:931px;background:linear-gradient(90deg,#e9e9e9,#f3f3f3)"></div>
<div style="left:1555px;top:89px;width:1px;height:931px;background:#f8f8f8"></div>
<svg style="left:1558.5px;top:96px;" width="8" height="5" viewBox="0 0 8 5"><path d="M0 5L4 0.5 8 5z" fill="#a9a9a9"/></svg>
<svg style="left:1558.5px;top:1009px;" width="8" height="5" viewBox="0 0 8 5"><path d="M0 0L4 4.5 8 0z" fill="#a9a9a9"/></svg>
<div style="left:42px;top:1020px;width:1513px;height:15px;background:#ececec"></div>
<div style="left:42px;top:1020px;width:47px;height:15px;background:#fff"></div>
<span class="t" style="left:49.00px;top:1017.86px;font-size:10.5px;line-height:21px;color:#111;letter-spacing:-0.435px;">49,61%</span>
<div style="left:89px;top:1020px;width:208px;height:15px;background:linear-gradient(#e2e2e2,#d2d2d2)"></div>
<svg style="left:95px;top:1022px;" width="12" height="12" viewBox="0 0 12 12"><circle cx="6" cy="6" r="5.2" fill="#d8d8d8" stroke="#8a8a8a" stroke-width="1.2"/><path d="M3.5 3.5h3v2.5h2v2.5h-5z" fill="none" stroke="#8a8a8a" stroke-width="1"/></svg>
<div style="left:111px;top:1020px;width:1px;height:15px;background:#9d9d9d"></div>
<div style="left:112px;top:1020px;width:1px;height:15px;background:#f4f4f4"></div>
<span class="t" style="left:147.00px;top:1017.36px;font-size:10.5px;line-height:21px;color:#222;letter-spacing:-0.282px;">Dok: 8,87 MB/39,5 MB</span>
<div style="left:282px;top:1020px;width:1px;height:15px;background:#9d9d9d"></div>
<svg style="left:286px;top:1023px;" width="7" height="9" viewBox="0 0 7 9"><path d="M0.5 0L6.5 4.5 .5 9z" fill="#111"/></svg>
<div style="left:296px;top:1020px;width:1px;height:15px;background:#9d9d9d"></div>
<svg style="left:302px;top:1024px;" width="5" height="8" viewBox="0 0 5 8"><path d="M5 0L0.5 4 5 8z" fill="#a9a9a9"/></svg>
<svg style="left:1544px;top:1024px;" width="5" height="8" viewBox="0 0 5 8"><path d="M0 0L4.5 4 0 8z" fill="#a9a9a9"/></svg>
<div style="left:1555px;top:1020px;width:15px;height:15px;background:#d9d9d9"></div>
<div style="left:0px;top:1035px;width:1920px;height:1px;background:#5c5c5c"></div>
<div style="left:0px;top:1036px;width:1920px;height:4px;background:#dcdcdc"></div>
<div style="left:0px;top:1037px;width:1920px;height:1px;background:#f3f3f3"></div>
<div style="left:0px;top:0px;width:1px;height:1040px;background:#6e6e6e"></div>
<div style="left:1px;top:36px;width:3px;height:1000px;background:#dcdcdc"></div>
<div style="left:4px;top:69px;width:1px;height:967px;background:#5c5c5c"></div>
<div style="left:1915px;top:69px;width:1px;height:967px;background:#5c5c5c"></div>
<div style="left:1916px;top:36px;width:4px;height:1000px;background:#dcdcdc"></div>
<div style="left:1917px;top:36px;width:1px;height:1000px;background:#f3f3f3"></div>
<div style="left:1919px;top:0px;width:1px;height:1040px;background:#8a8a8a"></div>
<!-- tools -->
<div style="left:5px;top:70px;width:37px;height:965px;background:#666"></div>
<div style="left:5px;top:70px;width:37px;height:12px;background:linear-gradient(#585858,#444 60%,#3c3c3c)"></div>
<svg style="left:9px;top:73px;" width="8" height="6" viewBox="0 0 8 6"><path d="M0 0l3.5 3L0 6zM4.2 0l3.5 3-3.5 3z" fill="#e6e6e6"/></svg>
<div style="left:5px;top:82px;width:37px;height:612px;background:#d5d5d5"></div>
<div style="left:5px;top:82px;width:37px;height:1px;background:#efefef"></div>
<div style="left:41px;top:82px;width:1px;height:612px;background:#8d8d8d"></div>
<svg style="left:9px;top:84px;" width="28" height="3" viewBox="0 0 28 3"><rect x="0" y="0" width="1" height="1" fill="#9a9a9a"/><rect x="2" y="0" width="1" height="1" fill="#9a9a9a"/><rect x="4" y="0" width="1" height="1" fill="#9a9a9a"/><rect x="6" y="0" width="1" height="1" fill="#9a9a9a"/><rect x="8" y="0" width="1" height="1" fill="#9a9a9a"/><rect x="10" y="0" width="1" height="1" fill="#9a9a9a"/><rect x="12" y="0" width="1" height="1" fill="#9a9a9a"/><rect x="14" y="0" width="1" height="1" fill="#9a9a9a"/><rect x="16" y="0" width="1" height="1" fill="#9a9a9a"/><rect x="18" y="0" width="1" height="1" fill="#9a9a9a"/><rect x="20" y="0" width="1" height="1" fill="#9a9a9a"/><rect x="22" y="0" width="1" height="1" fill="#9a9a9a"/><rect x="24" y="0" width="1" height="1" fill="#9a9a9a"/><rect x="26" y="0" width="1" height="1" fill="#9a9a9a"/><rect x="0" y="2" width="1" height="1" fill="#9a9a9a"/><rect x="2" y="2" width="1" height="1" fill="#9a9a9a"/><rect x="4" y="2" width="1" height="1" fill="#9a9a9a"/><rect x="6" y="2" width="1" height="1" fill="#9a9a9a"/><rect x="8" y="2" width="1" height="1" fill="#9a9a9a"/><rect x="10" y="2" width="1" height="1" fill="#9a9a9a"/><rect x="12" y="2" width="1" height="1" fill="#9a9a9a"/><rect x="14" y="2" width="1" height="1" fill="#9a9a9a"/><rect x="16" y="2" width="1" height="1" fill="#9a9a9a"/><rect x="18" y="2" width="1" height="1" fill="#9a9a9a"/><rect x="20" y="2" width="1" height="1" fill="#9a9a9a"/><rect x="22" y="2" width="1" height="1" fill="#9a9a9a"/><rect x="24" y="2" width="1" height="1" fill="#9a9a9a"/><rect x="26" y="2" width="1" height="1" fill="#9a9a9a"/></svg>
<div style="left:5px;top:90px;width:36px;height:30px;background:#cfd3d8"></div>
<svg style="left:11px;top:94px;" width="24" height="22" viewBox="0 0 24 22"><path d="M4 5l7.5 4.6L4 14.8z" fill="#3d3d3d"/><path d="M16.5 9v9M12 13.5h9" stroke="#333" stroke-width="1.1"/><path d="M16.5 8l1.8 2.2h-3.6zM16.5 19l1.8-2.2h-3.6zM11 13.5l2.2-1.8v3.6zM22 13.5l-2.2-1.8v3.6z" fill="#333"/></svg>
<svg style="left:0px;top:0px;" width="60" height="130" viewBox="0 0 60 130"><rect x="5.300" y="91.300" width="35.200" height="26.900" rx="1" fill="none" stroke="#f00c0c" stroke-width="3.600"/></svg>
<svg style="left:11px;top:117.5px;" width="24" height="22" viewBox="0 0 24 22"><rect x="5.5" y="5.5" width="13" height="11.5" fill="none" stroke="#333" stroke-width="1.3" stroke-dasharray="3 2"/></svg><svg style="left:31px;top:136.5px;" width="4" height="4" viewBox="0 0 4 4"><path d="M4 0v4H0z" fill="#111"/></svg>
<svg style="left:11px;top:140.5px;" width="24" height="22" viewBox="0 0 24 22"><path d="M3.750 4.750L20.500 11.750 6.500 14.750z" fill="none" stroke="#3a3a3a" stroke-width="1.300" stroke-linejoin="round"/><path d="M9.500 15.200L7.300 19" stroke="#3a3a3a" stroke-width="1.500"/><path d="M10.250 3.500h4.700a3.900 3.900 0 0 1 0 7.800h-4.700v-2.500h4.400a1.400 1.400 0 0 0 0-2.800h-4.400z" fill="#3d3d3d"/><rect x="10.250" y="3.700" width="2.600" height="2.100" fill="#f2f2f2"/><rect x="10.250" y="9" width="2.600" height="2.100" fill="#f2f2f2"/></svg><svg style="left:31px;top:159.5px;" width="4" height="4" viewBox="0 0 4 4"><path d="M4 0v4H0z" fill="#111"/></svg>
<svg style="left:11px;top:163.5px;" width="24" height="22" viewBox="0 0 24 22"><path d="M11 10l8.5 9" stroke="#2d2d2d" stroke-width="2.2"/><path d="M8 1.5l1.2 3.8 3.8-1.6-1.8 3.6 3.6 1.4-3.8 1 1 3.8-3.2-2.4-2.6 3-.2-4-3.8.2 3-2.6L2 5l3.8.6z" fill="#f4f4f4" stroke="#8a8a8a" stroke-width=".7" stroke-dasharray="1.2 .8"/></svg><svg style="left:31px;top:182.5px;" width="4" height="4" viewBox="0 0 4 4"><path d="M4 0v4H0z" fill="#111"/></svg>
<svg style="left:11px;top:186.5px;" width="24" height="22" viewBox="0 0 24 22"><path d="M7.5 3v12.5H19M3.5 7H15.5v12" fill="none" stroke="#3a3a3a" stroke-width="2"/><path d="M8.5 14.5L18 4" stroke="#3a3a3a" stroke-width=".8"/></svg><svg style="left:31px;top:205.5px;" width="4" height="4" viewBox="0 0 4 4"><path d="M4 0v4H0z" fill="#111"/></svg>
<svg style="left:11px;top:209.5px;" width="24" height="22" viewBox="0 0 24 22"><path d="M6 18l1-3 6.5-6.5 2 2L9 17z" fill="#f2f2f2" stroke="#444" stroke-width=".9"/><path d="M12 7l2-2 3 3-2 2z" fill="#333"/><path d="M14.2 5.6l2-2.4a1.8 1.8 0 0 1 2.8 2.6l-2.4 2z" fill="#444"/></svg><svg style="left:31px;top:228.5px;" width="4" height="4" viewBox="0 0 4 4"><path d="M4 0v4H0z" fill="#111"/></svg>
<div style="left:9px;top:233px;width:28px;height:1px;background:#9b9b9b"></div>
<div style="left:9px;top:234px;width:28px;height:1px;background:#ececec"></div>
<svg style="left:11px;top:236.5px;" width="24" height="22" viewBox="0 0 24 22"><path d="M6 15a4.5 5.5 0 0 1 2.5-10.5" fill="none" stroke="#222" stroke-width="1.1" stroke-dasharray="1 1.3"/><rect x="4.5" y="8" width="17" height="6.4" rx="3.2" fill="#6a6a6a" stroke="#444" stroke-width=".6" transform="rotate(-40 13 11.2)"/><rect x="10.3" y="8.4" width="5.4" height="5.6" fill="#8e8e8e" transform="rotate(-40 13 11.2)"/></svg><svg style="left:31px;top:255.5px;" width="4" height="4" viewBox="0 0 4 4"><path d="M4 0v4H0z" fill="#111"/></svg>
<svg style="left:11px;top:259.5px;" width="24" height="22" viewBox="0 0 24 22"><path d="M19.5 3.5l-7 8" stroke="#555" stroke-width="2.4"/><path d="M19.5 3.5l-7 8" stroke="#ddd" stroke-width=".7"/><path d="M3.5 15.8c3-.6 4.5-2.8 6.5-5.3l3.8 2.9c-2.2 3.4-6 4.4-10.3 2.4z" fill="#3a3a3a"/></svg><svg style="left:31px;top:278.5px;" width="4" height="4" viewBox="0 0 4 4"><path d="M4 0v4H0z" fill="#111"/></svg>
<svg style="left:11px;top:283px;" width="24" height="22" viewBox="0 0 24 22"><g fill="#222"><rect x="2" y="2" width="2" height="2"/><rect x="6" y="2" width="2" height="2"/><rect x="4" y="4" width="2" height="2"/><rect x="2" y="6" width="2" height="2"/><rect x="6" y="6" width="2" height="2"/><rect x="4" y="8" width="2" height="2"/></g><g fill="#fff"><rect x="4" y="2" width="2" height="2"/><rect x="2" y="4" width="2" height="2"/><rect x="6" y="4" width="2" height="2"/><rect x="4" y="6" width="2" height="2"/></g><circle cx="12.5" cy="4.8" r="2.4" fill="#4a4a4a"/><path d="M11.3 6h2.4l.5 6h-3.4z" fill="#4a4a4a"/><rect x="5.5" y="12" width="14" height="4.8" rx="1" fill="#5a5a5a" stroke="#3a3a3a" stroke-width=".8"/></svg><svg style="left:31px;top:302px;" width="4" height="4" viewBox="0 0 4 4"><path d="M4 0v4H0z" fill="#111"/></svg>
<svg style="left:11px;top:306px;" width="24" height="22" viewBox="0 0 24 22"><path d="M18.5 3l-6 7.5" stroke="#555" stroke-width="2.2"/><path d="M18.5 3l-6 7.5" stroke="#ddd" stroke-width=".6"/><path d="M4 14.8c2.6-.4 3.8-2.2 5.6-4.4l3.3 2.5c-2 3-5.2 3.7-8.9 1.9z" fill="#3a3a3a"/><path d="M5.5 7.5A5.5 4 0 0 1 13 4.2" fill="none" stroke="#3a3a3a" stroke-width="1.6"/><path d="M4 5.5l1 3.6 3-1.6z" fill="#3a3a3a"/><path d="M17 9.5l1.5 5-3.5 3" stroke="#444" stroke-width=".9" stroke-dasharray="1 1.2" fill="none"/></svg><svg style="left:31px;top:325px;" width="4" height="4" viewBox="0 0 4 4"><path d="M4 0v4H0z" fill="#111"/></svg>
<svg style="left:11px;top:329px;" width="24" height="22" viewBox="0 0 24 22"><path d="M3.5 14.5l6-8.5h10l-5.5 8.5z" fill="#9a9a9a"/><path d="M9.5 6h10v3.5l-5.5 8.5v-3.5z" fill="#555"/><path d="M3.5 14.500h10.500v3.5H3.5z" fill="#707070"/></svg><svg style="left:31px;top:348px;" width="4" height="4" viewBox="0 0 4 4"><path d="M4 0v4H0z" fill="#111"/></svg>
<svg style="left:14px;top:356.5px" width="18" height="14" viewBox="0 0 18 14"><defs><linearGradient id="gt"><stop offset="0" stop-color="#333"/><stop offset="1" stop-color="#e8e8e8"/></linearGradient></defs><rect x=".6" y=".6" width="16" height="11.5" fill="url(#gt)" stroke="#3a3a3a" stroke-width="1.2"/></svg>
<svg style="left:31px;top:371px;" width="4" height="4" viewBox="0 0 4 4"><path d="M4 0v4H0z" fill="#111"/></svg>
<svg style="left:15px;top:376px" width="14" height="18" viewBox="0 0 14 18"><defs><radialGradient id="gd" cx=".4" cy=".6"><stop offset="0" stop-color="#cfcfcf"/><stop offset="1" stop-color="#7d7d7d"/></radialGradient></defs><path d="M7 1.500C8.500 5.500 12 8.500 12 11.500a5 5 0 0 1-10 0C2 8.500 5.500 5.500 7 1.500z" fill="url(#gd)" stroke="#777" stroke-width=".7"/></svg>
<svg style="left:31px;top:394px;" width="4" height="4" viewBox="0 0 4 4"><path d="M4 0v4H0z" fill="#111"/></svg>
<svg style="left:11px;top:397.5px;" width="24" height="22" viewBox="0 0 24 22"><path d="M3.5 10c0-4 2.500-6.500 6-6.500 4 0 7 2.500 10 6.500 .8 1.200.8 5-.5 5.500-1.500-2.500-3-3.200-5.500-2.500-3 1.200-6 1.500-8 .2-1.500-1-2-2-2-3.200z" fill="#dcdcdc" stroke="#4a4a4a" stroke-width="1.100"/><circle cx="8.600" cy="9.300" r="2.300" fill="none" stroke="#4a4a4a" stroke-width="1.100"/></svg><svg style="left:31px;top:416.5px;" width="4" height="4" viewBox="0 0 4 4"><path d="M4 0v4H0z" fill="#111"/></svg>
<div style="left:9px;top:422px;width:28px;height:1px;background:#9b9b9b"></div>
<div style="left:9px;top:423px;width:28px;height:1px;background:#ececec"></div>
<svg style="left:11px;top:426px;" width="24" height="22" viewBox="0 0 24 22"><path d="M13.200 2.500l6 5.500-1.800 2-6-5.500z" fill="#3a3a3a"/><path d="M11 5.500l5.800 5.200-3.800 5.300-8.500 2.500 2.500-8.200z" fill="#f0f0f0" stroke="#4a4a4a" stroke-width="1"/><path d="M5 18l5.500-5.700" stroke="#4a4a4a" stroke-width=".8"/><circle cx="10.800" cy="11.800" r="1.100" fill="#333"/></svg><svg style="left:31px;top:445px;" width="4" height="4" viewBox="0 0 4 4"><path d="M4 0v4H0z" fill="#111"/></svg>
<span class="t" style="left:15.5px;top:446px;font-family:'Liberation Serif',serif;font-size:24px;line-height:24px;color:#3a3a3a">T</span>
<svg style="left:31px;top:466.5px;" width="4" height="4" viewBox="0 0 4 4"><path d="M4 0v4H0z" fill="#111"/></svg>
<svg style="left:11px;top:471px;" width="24" height="22" viewBox="0 0 24 22"><path d="M8.500 3v14l3.200-3 2.300 5 2-.9-2.300-4.900 4.300-.4z" fill="#fbfbfb" stroke="#3a3a3a" stroke-width="1.100"/></svg><svg style="left:31px;top:490px;" width="4" height="4" viewBox="0 0 4 4"><path d="M4 0v4H0z" fill="#111"/></svg>
<svg style="left:11px;top:494px;" width="24" height="22" viewBox="0 0 24 22"><g transform="translate(-1.800 -1.800) scale(1.150)"><path d="M13 3.500c1.800-.6 3 .8 2.400 2.600 2.300-.9 4.600.2 4 2.300-.5 1.500-2.300 1.700-3.700 2.200 1.300 1.600 1.300 3.900-.5 4.300-1.900.4-2.700-1.400-3.800-2.600-1.200 1.400-2.200 3.700-4.500 3.700-2.200 0-3-2-1.700-3.600 1.200-1.500 3.100-2.200 3.800-3.900.5-1.500.8-3.700 4-5z" fill="#8f8f8f" stroke="#5a5a5a" stroke-width="1"/></g></svg><svg style="left:31px;top:513px;" width="4" height="4" viewBox="0 0 4 4"><path d="M4 0v4H0z" fill="#111"/></svg>
<div style="left:9px;top:518px;width:28px;height:1px;background:#9b9b9b"></div>
<div style="left:9px;top:519px;width:28px;height:1px;background:#ececec"></div>
<svg style="left:11px;top:522px" width="24" height="20" viewBox="0 0 24 20"><defs><radialGradient id="gs" cx=".4" cy=".35"><stop offset="0" stop-color="#f4f4f4"/><stop offset="1" stop-color="#8a8a8a"/></radialGradient></defs><path d="M7 15C2 12 1 7.500 5.500 6 10 4.500 17 7 19.500 11c1.500 2.500.5 5-2.500 4.500" fill="none" stroke="#4a4a4a" stroke-width="1.300"/><path d="M6 14.500l6.500 1.200-5 2.300z" fill="#4a4a4a"/><circle cx="12.500" cy="6.500" r="4.300" fill="url(#gs)" stroke="#999" stroke-width=".5"/></svg>
<svg style="left:31px;top:540px;" width="4" height="4" viewBox="0 0 4 4"><path d="M4 0v4H0z" fill="#111"/></svg>
<svg style="left:11px;top:544.5px;" width="24" height="22" viewBox="0 0 24 22"><path d="M7 17.500C2 14.500 1 10 5.500 8.500 10 7 17 9.500 19.500 13.500c1.500 2.500.5 5-2.500 4.500" fill="none" stroke="#4a4a4a" stroke-width="1.300"/><path d="M6 17l6.500 1.200-5 2.300z" fill="#4a4a4a"/><rect x="15.500" y="2.500" width="6" height="3.600" rx="1" fill="#4a4a4a"/><path d="M13 2.200l2.800 2.100L13 6.400z" fill="#4a4a4a"/></svg><svg style="left:31px;top:563.5px;" width="4" height="4" viewBox="0 0 4 4"><path d="M4 0v4H0z" fill="#111"/></svg>
<svg style="left:11px;top:566.5px;" width="24" height="22" viewBox="0 0 24 22"><path d="M9 18.500c-2-2-3.500-4.500-5-6.800-.6-1.100.6-1.900 1.600-1.100l2.200 2.200V5.200c0-1.300 1.800-1.300 1.900 0l.3 4.500V3.600c0-1.300 1.900-1.300 2 0l.2 5.800.4-4.800c.1-1.200 1.900-1.100 1.900.1v5.500l.7-3.200c.3-1.100 1.800-.9 1.700.3-.2 3.300-.5 6.700-1.700 11.200z" fill="#f4f4f4" stroke="#3a3a3a" stroke-width="1.100"/></svg><svg style="left:31px;top:585.5px;" width="4" height="4" viewBox="0 0 4 4"><path d="M4 0v4H0z" fill="#111"/></svg>
<svg style="left:11px;top:589px;" width="24" height="22" viewBox="0 0 24 22"><circle cx="9.500" cy="8.500" r="4.800" fill="#dadada" stroke="#444" stroke-width="1.300"/><path d="M13 12l6 6" stroke="#333" stroke-width="2.200"/></svg>
<svg style="left:9px;top:617px;" width="10" height="10" viewBox="0 0 10 10"><rect x="3.500" y="3.500" width="6" height="6" fill="#fff" stroke="#888" stroke-width=".6"/><rect x="0" y="0" width="7" height="7" fill="#1a1a1a"/></svg>
<svg style="left:26px;top:616px;" width="11" height="11" viewBox="0 0 11 11"><path d="M2.500 4.500Q7.500 2 8.500 8" fill="none" stroke="#222" stroke-width="1.500"/><path d="M0 5.200L3.400 1.200 4.600 6z" fill="#222"/><path d="M5.800 7.200l5.200-.4L8.800 11z" fill="#222"/></svg>
<div style="left:18px;top:642px;width:20px;height:20px;background:#fff;border:1px solid #e4e4e4;box-sizing:border-box"></div>
<div style="left:8px;top:632px;width:20px;height:20px;background:#000;border:1px solid #f4f4f4;box-sizing:border-box"></div>
<svg style="left:14px;top:669px;" width="18" height="13" viewBox="0 0 18 13"><rect x=".5" y=".5" width="16.500" height="11.500" fill="#fff" stroke="#333"/><circle cx="8.700" cy="6.200" r="3.800" fill="none" stroke="#333" stroke-width="1"/></svg>
<!-- panels -->
<div style="left:1570px;top:70px;width:345px;height:12px;background:linear-gradient(#585858,#454545 60%,#3a3a3a)"></div>
<svg style="left:1595px;top:73px;" width="8" height="6" viewBox="0 0 8 6"><path d="M3.500 0L0 3l3.500 3zM7.700 0L4.200 3l3.500 3z" fill="#e6e6e6"/></svg>
<svg style="left:1903px;top:73px;" width="8" height="6" viewBox="0 0 8 6"><path d="M0 0l3.500 3L0 6zM4.200 0l3.500 3-3.500 3z" fill="#e6e6e6"/></svg>
<div style="left:1570px;top:82px;width:37px;height:953px;background:#666"></div>
<div style="left:1571px;top:82px;width:36px;height:73px;background:#d5d5d5"></div>
<div style="left:1570px;top:70px;width:1px;height:965px;background:#3e3e3e"></div>
<svg style="left:1576px;top:85px;" width="26" height="3" viewBox="0 0 26 3"><rect x="0" y="0" width="1" height="1" fill="#9a9a9a"/><rect x="2" y="0" width="1" height="1" fill="#9a9a9a"/><rect x="4" y="0" width="1" height="1" fill="#9a9a9a"/><rect x="6" y="0" width="1" height="1" fill="#9a9a9a"/><rect x="8" y="0" width="1" height="1" fill="#9a9a9a"/><rect x="10" y="0" width="1" height="1" fill="#9a9a9a"/><rect x="12" y="0" width="1" height="1" fill="#9a9a9a"/><rect x="14" y="0" width="1" height="1" fill="#9a9a9a"/><rect x="16" y="0" width="1" height="1" fill="#9a9a9a"/><rect x="18" y="0" width="1" height="1" fill="#9a9a9a"/><rect x="20" y="0" width="1" height="1" fill="#9a9a9a"/><rect x="22" y="0" width="1" height="1" fill="#9a9a9a"/><rect x="24" y="0" width="1" height="1" fill="#9a9a9a"/><rect x="0" y="2" width="1" height="1" fill="#9a9a9a"/><rect x="2" y="2" width="1" height="1" fill="#9a9a9a"/><rect x="4" y="2" width="1" height="1" fill="#9a9a9a"/><rect x="6" y="2" width="1" height="1" fill="#9a9a9a"/><rect x="8" y="2" width="1" height="1" fill="#9a9a9a"/><rect x="10" y="2" width="1" height="1" fill="#9a9a9a"/><rect x="12" y="2" width="1" height="1" fill="#9a9a9a"/><rect x="14" y="2" width="1" height="1" fill="#9a9a9a"/><rect x="16" y="2" width="1" height="1" fill="#9a9a9a"/><rect x="18" y="2" width="1" height="1" fill="#9a9a9a"/><rect x="20" y="2" width="1" height="1" fill="#9a9a9a"/><rect x="22" y="2" width="1" height="1" fill="#9a9a9a"/><rect x="24" y="2" width="1" height="1" fill="#9a9a9a"/></svg>
<svg style="left:1580px;top:101px;" width="18" height="13" viewBox="0 0 18 13"><rect x=".6" y=".6" width="16" height="11.500" fill="#cfcfcf" stroke="#444" stroke-width="1.200"/><path d="M4.500 2.500l8.500 3.800-8.500 3.800z" fill="#444"/></svg>
<svg style="left:1581px;top:129px;" width="17" height="18" viewBox="0 0 17 18"><rect x="1.500" y=".500" width="4" height="4" fill="#fff" stroke="#444"/><rect x="1.500" y="6.500" width="4" height="4" fill="#fff" stroke="#444"/><rect x="1" y="12.500" width="5" height="4.500" fill="#555"/><path d="M9 15c5-1.500 6.500-7 3.500-12" fill="none" stroke="#444" stroke-width="1.800"/><path d="M9 3.500l5.500-2.500.5 5z" fill="#444"/></svg>
<div style="left:1607px;top:82px;width:308px;height:424px;background:#d6d6d6"></div>
<div style="left:1607px;top:82px;width:308px;height:17px;background:linear-gradient(#9f9f9f,#8e8e8e 50%,#858585)"></div><div style="left:1607px;top:98px;width:308px;height:1px;background:#6f6f6f"></div><div style="left:1607px;top:82px;width:39px;height:16px;background:linear-gradient(#9a9a9a,#8b8b8b);border-right:1px solid #6a6a6a;border-left:1px solid #a9a9a9;box-sizing:border-box"></div><span class="t" style="left:1614.00px;top:80.36px;font-size:10.5px;line-height:21px;color:#2c2c2c;font-weight:bold;letter-spacing:-0.719px;text-shadow:0 1px 0 #aaa;">Farbe</span><div style="left:1647px;top:82px;width:61px;height:17px;background:linear-gradient(#eeeeee,#dedede 60%,#d6d6d6)"></div><span class="t" style="left:1654.00px;top:80.36px;font-size:10.5px;line-height:21px;color:#2a2a2a;font-weight:bold;letter-spacing:-0.435px;text-shadow:0 0 .5px #666;">Farbfelder</span><div style="left:1708px;top:82px;width:71px;height:16px;background:linear-gradient(#9a9a9a,#8b8b8b);border-right:1px solid #6a6a6a;border-left:1px solid #a9a9a9;box-sizing:border-box"></div><span class="t" style="left:1715.00px;top:80.36px;font-size:10.5px;line-height:21px;color:#2c2c2c;font-weight:bold;letter-spacing:-0.282px;text-shadow:0 1px 0 #aaa;">Korrekturen</span><div style="left:1779px;top:82px;width:43px;height:16px;background:linear-gradient(#9a9a9a,#8b8b8b);border-right:1px solid #6a6a6a;border-left:1px solid #a9a9a9;box-sizing:border-box"></div><span class="t" style="left:1787.00px;top:80.36px;font-size:10.5px;line-height:21px;color:#2c2c2c;font-weight:bold;letter-spacing:-0.655px;text-shadow:0 1px 0 #aaa;">Pinsel</span><svg style="left:1897px;top:86px;" width="15" height="10" viewBox="0 0 15 10"><path d="M0 2.500h5L2.500 5.500z" fill="#2a2a2a"/><path d="M6.500 1.500h8M6.500 4h8M6.500 6.500h8M6.500 9h8" stroke="#2a2a2a" stroke-width="1.100"/></svg>
<svg style="left:1608px;top:100px;" width="290" height="50" viewBox="0 0 290 50"><rect x="0" y="0" width="289" height="13" fill="#1c1c1c"/><rect x="1" y="1" width="11" height="11" fill="#f7e07a"/><rect x="13" y="1" width="11" height="11" fill="#f5eb14"/><rect x="25" y="1" width="11" height="11" fill="#fbea12"/><rect x="37" y="1" width="11" height="11" fill="#f6d40e"/><rect x="49" y="1" width="11" height="11" fill="#f5bd14"/><rect x="61" y="1" width="11" height="11" fill="#f0a512"/><rect x="73" y="1" width="11" height="11" fill="#ec8a1e"/><rect x="85" y="1" width="11" height="11" fill="#e67a22"/><rect x="97" y="1" width="11" height="11" fill="#e25231"/><rect x="109" y="1" width="11" height="11" fill="#f2a07f"/><rect x="121" y="1" width="11" height="11" fill="#e24331"/><rect x="133" y="1" width="11" height="11" fill="#dc0a30"/><rect x="145" y="1" width="11" height="11" fill="#dc1440"/><rect x="157" y="1" width="11" height="11" fill="#d41443"/><rect x="169" y="1" width="11" height="11" fill="#c41e45"/><rect x="181" y="1" width="11" height="11" fill="#b41e4b"/><rect x="193" y="1" width="11" height="11" fill="#8c2b41"/><rect x="205" y="1" width="11" height="11" fill="#ea8c9a"/><rect x="217" y="1" width="11" height="11" fill="#e0403c"/><rect x="229" y="1" width="11" height="11" fill="#dc0a4b"/><rect x="241" y="1" width="11" height="11" fill="#d4075c"/><rect x="253" y="1" width="11" height="11" fill="#e0086c"/><rect x="265" y="1" width="11" height="11" fill="#c00a7a"/><rect x="277" y="1" width="11" height="11" fill="#dc0a8c"/><rect x="0" y="12" width="289" height="13" fill="#1c1c1c"/><rect x="1" y="13" width="11" height="11" fill="#c40a5f"/><rect x="13" y="13" width="11" height="11" fill="#a20a82"/><rect x="25" y="13" width="11" height="11" fill="#c80a8a"/><rect x="37" y="13" width="11" height="11" fill="#dc0a92"/><rect x="49" y="13" width="11" height="11" fill="#a00a8c"/><rect x="61" y="13" width="11" height="11" fill="#7a1490"/><rect x="73" y="13" width="11" height="11" fill="#4b2896"/><rect x="85" y="13" width="11" height="11" fill="#6a2a98"/><rect x="97" y="13" width="11" height="11" fill="#6e1e94"/><rect x="109" y="13" width="11" height="11" fill="#0a3c78"/><rect x="121" y="13" width="11" height="11" fill="#2c6ebe"/><rect x="133" y="13" width="11" height="11" fill="#1482c0"/><rect x="145" y="13" width="11" height="11" fill="#0a3c7d"/><rect x="157" y="13" width="11" height="11" fill="#283c9b"/><rect x="169" y="13" width="11" height="11" fill="#1450a5"/><rect x="181" y="13" width="11" height="11" fill="#1464be"/><rect x="193" y="13" width="11" height="11" fill="#5550b0"/><rect x="205" y="13" width="11" height="11" fill="#2d82c8"/><rect x="217" y="13" width="11" height="11" fill="#149bdc"/><rect x="229" y="13" width="11" height="11" fill="#149bd7"/><rect x="241" y="13" width="11" height="11" fill="#148cc8"/><rect x="253" y="13" width="11" height="11" fill="#55b4e6"/><rect x="265" y="13" width="11" height="11" fill="#1496aa"/><rect x="277" y="13" width="11" height="11" fill="#0a9b87"/><rect x="0" y="24" width="289" height="13" fill="#1c1c1c"/><rect x="1" y="25" width="11" height="11" fill="#28aa87"/><rect x="13" y="25" width="11" height="11" fill="#0a9160"/><rect x="25" y="25" width="11" height="11" fill="#0a875f"/><rect x="37" y="25" width="11" height="11" fill="#0a7a5a"/><rect x="49" y="25" width="11" height="11" fill="#0a8c50"/><rect x="61" y="25" width="11" height="11" fill="#4b825a"/><rect x="73" y="25" width="11" height="11" fill="#0a968c"/><rect x="85" y="25" width="11" height="11" fill="#28a537"/><rect x="97" y="25" width="11" height="11" fill="#235f23"/><rect x="109" y="25" width="11" height="11" fill="#82873c"/><rect x="121" y="25" width="11" height="11" fill="#5a913c"/><rect x="133" y="25" width="11" height="11" fill="#28a037"/><rect x="145" y="25" width="11" height="11" fill="#5ab42d"/><rect x="157" y="25" width="11" height="11" fill="#78b928"/><rect x="169" y="25" width="11" height="11" fill="#8cbe23"/><rect x="181" y="25" width="11" height="11" fill="#ebc80f"/><rect x="193" y="25" width="11" height="11" fill="#e6e614"/><rect x="205" y="25" width="11" height="11" fill="#e6aa0a"/><rect x="217" y="25" width="11" height="11" fill="#e68c23"/><rect x="229" y="25" width="11" height="11" fill="#b97d14"/><rect x="241" y="25" width="11" height="11" fill="#9b5f19"/><rect x="253" y="25" width="11" height="11" fill="#8c7832"/><rect x="265" y="25" width="11" height="11" fill="#5a371e"/><rect x="277" y="25" width="11" height="11" fill="#6e4b3c"/><rect x="0" y="36" width="169" height="13" fill="#1c1c1c"/><rect x="1" y="37" width="11" height="11" fill="#8c3228"/><rect x="13" y="37" width="11" height="11" fill="#dc5a23"/><rect x="25" y="37" width="11" height="11" fill="#c8412d"/><rect x="37" y="37" width="11" height="11" fill="#9b4637"/><rect x="49" y="37" width="11" height="11" fill="#8c3c37"/><rect x="61" y="37" width="11" height="11" fill="#232323"/><rect x="73" y="37" width="11" height="11" fill="#beb9a0"/><rect x="85" y="37" width="11" height="11" fill="#463737"/><rect x="97" y="37" width="11" height="11" fill="#aaafaa"/><rect x="109" y="37" width="11" height="11" fill="#7d8287"/><rect x="121" y="37" width="11" height="11" fill="#555a69"/><rect x="133" y="37" width="11" height="11" fill="#9b9b87"/><rect x="145" y="37" width="11" height="11" fill="#8c8782"/><rect x="157" y="37" width="11" height="11" fill="#3c413c"/></svg>
<div style="left:1898px;top:100px;width:17px;height:389px;background:#ececec"></div>
<svg style="left:1902px;top:107px;" width="8" height="5" viewBox="0 0 8 5"><path d="M0 5L4 .5 8 5z" fill="#a9a9a9"/></svg>
<svg style="left:1902px;top:478px;" width="8" height="5" viewBox="0 0 8 5"><path d="M0 0L4 4.500 8 0z" fill="#a9a9a9"/></svg>
<div style="left:1607px;top:489px;width:308px;height:1px;background:#929292"></div>
<div style="left:1607px;top:490px;width:308px;height:16px;background:#d9d9d9"></div>
<svg style="left:1852px;top:492px;" width="11" height="11" viewBox="0 0 11 11"><path d="M1.500 1.500h8v8h-8z" fill="#fff" stroke="#555" stroke-width="1"/><path d="M9.500 3v7h-7" fill="none" stroke="#222" stroke-width="1.600"/><path d="M4.500 5.500h3v3" fill="none" stroke="#333" stroke-width="1"/></svg>
<svg style="left:1880px;top:491px;" width="11" height="12" viewBox="0 0 11 12"><path d="M2 3.500h7l-.8 7.500H2.800z" fill="#eee" stroke="#444" stroke-width="1"/><path d="M1 3h9M4 1.500h3" stroke="#444" stroke-width="1.200"/><path d="M4.200 5v4.500M6.800 5v4.500" stroke="#555" stroke-width=".8"/></svg>
<svg style="left:1904px;top:494px;" width="10" height="10" viewBox="0 0 10 10"><rect x="8" y="0" width="1" height="1" fill="#8c8c8c"/><rect x="6" y="2" width="1" height="1" fill="#8c8c8c"/><rect x="8" y="2" width="1" height="1" fill="#8c8c8c"/><rect x="4" y="4" width="1" height="1" fill="#8c8c8c"/><rect x="6" y="4" width="1" height="1" fill="#8c8c8c"/><rect x="8" y="4" width="1" height="1" fill="#8c8c8c"/><rect x="2" y="6" width="1" height="1" fill="#8c8c8c"/><rect x="4" y="6" width="1" height="1" fill="#8c8c8c"/><rect x="6" y="6" width="1" height="1" fill="#8c8c8c"/><rect x="8" y="6" width="1" height="1" fill="#8c8c8c"/><rect x="0" y="8" width="1" height="1" fill="#8c8c8c"/><rect x="2" y="8" width="1" height="1" fill="#8c8c8c"/><rect x="4" y="8" width="1" height="1" fill="#8c8c8c"/><rect x="6" y="8" width="1" height="1" fill="#8c8c8c"/><rect x="8" y="8" width="1" height="1" fill="#8c8c8c"/></svg>
<div style="left:1607px;top:506px;width:308px;height:3px;background:#3c3c3c"></div>
<div style="left:1607px;top:509px;width:308px;height:503px;background:#d6d6d6"></div>
<div style="left:1607px;top:509px;width:308px;height:17px;background:linear-gradient(#9f9f9f,#8e8e8e 50%,#858585)"></div><div style="left:1607px;top:525px;width:308px;height:1px;background:#6f6f6f"></div><div style="left:1607px;top:509px;width:47px;height:17px;background:linear-gradient(#eeeeee,#dedede 60%,#d6d6d6)"></div><span class="t" style="left:1614.00px;top:507.36px;font-size:10.5px;line-height:21px;color:#2a2a2a;font-weight:bold;letter-spacing:-0.987px;text-shadow:0 0 .5px #666;">Ebenen</span><div style="left:1654px;top:509px;width:47px;height:16px;background:linear-gradient(#9a9a9a,#8b8b8b);border-right:1px solid #6a6a6a;border-left:1px solid #a9a9a9;box-sizing:border-box"></div><span class="t" style="left:1662.00px;top:507.36px;font-size:10.5px;line-height:21px;color:#2c2c2c;font-weight:bold;letter-spacing:-0.739px;text-shadow:0 1px 0 #aaa;">Kanäle</span><div style="left:1701px;top:509px;width:42px;height:16px;background:linear-gradient(#9a9a9a,#8b8b8b);border-right:1px solid #6a6a6a;border-left:1px solid #a9a9a9;box-sizing:border-box"></div><span class="t" style="left:1709.00px;top:507.36px;font-size:10.5px;line-height:21px;color:#2c2c2c;font-weight:bold;letter-spacing:-0.519px;text-shadow:0 1px 0 #aaa;">Pfade</span><svg style="left:1897px;top:513px;" width="15" height="10" viewBox="0 0 15 10"><path d="M0 2.500h5L2.500 5.500z" fill="#2a2a2a"/><path d="M6.500 1.500h8M6.500 4h8M6.500 6.500h8M6.500 9h8" stroke="#2a2a2a" stroke-width="1.100"/></svg>
<div style="left:1612px;top:530px;width:160px;height:17px;background:#fff;box-shadow:0 0 1.500px 1px #eee"></div>
<span class="t" style="left:1616.00px;top:528.19px;font-size:11px;line-height:22px;color:#111;letter-spacing:-0.575px;">Normal</span>
<svg style="left:1760px;top:537px;" width="8" height="5" viewBox="0 0 8 5"><path d="M0 0h8L4 4.500z" fill="#111"/></svg>
<span class="t" style="left:1776.50px;top:526.69px;font-size:11px;line-height:22px;color:#111;letter-spacing:-0.251px;">Deckkraft:</span>
<div style="left:1827px;top:530px;width:37px;height:16px;background:#fff;border:1px solid #c4c4c4;box-sizing:border-box"></div><span class="t" style="left:1832.50px;top:527.69px;font-size:11px;line-height:22px;color:#111;letter-spacing:-0.783px;">100%</span><div style="left:1864px;top:530px;width:14px;height:16px;background:linear-gradient(#f2f2f2,#dcdcdc);border:1px solid #b9b9b9;box-sizing:border-box"></div><svg style="left:1869px;top:534.5px;" width="4" height="7" viewBox="0 0 4 7"><path d="M0 0l3.500 3.500L0 7z" fill="#3c50b4"/></svg>
<div style="left:1609px;top:551px;width:304px;height:1px;background:#a9a9a9"></div>
<div style="left:1609px;top:552px;width:304px;height:1px;background:#e6e6e6"></div>
<span class="t" style="left:1615.00px;top:553.19px;font-size:11px;line-height:22px;color:#111;letter-spacing:-0.464px;">Fixieren:</span>
<svg style="left:1660px;top:558px;" width="12" height="12" viewBox="0 0 12 12"><rect x=".5" y=".5" width="10" height="10" fill="#fff" stroke="#777"/><rect x="1" y="1" width="3" height="3" fill="#ccc"/><rect x="7" y="1" width="3" height="3" fill="#ccc"/><rect x="4" y="4" width="3" height="3" fill="#ccc"/><rect x="1" y="7" width="3" height="3" fill="#ccc"/><rect x="7" y="7" width="3" height="3" fill="#ccc"/></svg>
<svg style="left:1676px;top:557px;" width="15" height="14" viewBox="0 0 15 14"><path d="M13.500 1l-6 7" stroke="#555" stroke-width="1.800"/><path d="M1 12.500c2.500-.5 3.500-2 5-4l2.500 2c-1.800 2.600-4.500 3.300-7.500 2z" fill="#333"/></svg>
<svg style="left:1695px;top:557px;" width="13" height="13" viewBox="0 0 13 13"><path d="M6.500 1v11M1 6.500h11" stroke="#222" stroke-width="1.100"/><path d="M6.500 0l2 2.500h-4zM6.500 13l2-2.500h-4zM0 6.500l2.500-2v4zM13 6.500l-2.500-2v4z" fill="#222"/></svg>
<svg style="left:1714px;top:557px;" width="11" height="13" viewBox="0 0 11 13"><path d="M2.800 6V4.200a2.700 2.700 0 0 1 5.400 0V6" fill="none" stroke="#222" stroke-width="1.500"/><rect x="1" y="6" width="9" height="6.500" rx=".8" fill="#3a3a3a"/><rect x="4.500" y="8" width="2" height="2.500" fill="#999"/></svg>
<span class="t" style="left:1791.50px;top:553.19px;font-size:11px;line-height:22px;color:#111;letter-spacing:-0.653px;">Fläche:</span>
<div style="left:1827px;top:556px;width:37px;height:16px;background:#fff;border:1px solid #c4c4c4;box-sizing:border-box"></div><span class="t" style="left:1832.50px;top:553.69px;font-size:11px;line-height:22px;color:#111;letter-spacing:-0.783px;">100%</span><div style="left:1864px;top:556px;width:14px;height:16px;background:linear-gradient(#f2f2f2,#dcdcdc);border:1px solid #b9b9b9;box-sizing:border-box"></div><svg style="left:1869px;top:560.5px;" width="4" height="7" viewBox="0 0 4 7"><path d="M0 0l3.500 3.500L0 7z" fill="#3c50b4"/></svg>
<div style="left:1632px;top:576px;width:266px;height:39px;background:#3399ff"></div>
<div style="left:1607px;top:615px;width:291px;height:1px;background:#8f8f8f"></div>
<div style="left:1630px;top:576px;width:1px;height:40px;background:#9d9d9d"></div>
<div style="left:1631px;top:576px;width:1px;height:40px;background:#3399ff"></div>
<div style="left:1612px;top:588px;width:15px;height:15px;background:#dadada;border:1px solid #bdbdbd;border-right-color:#efefef;border-bottom-color:#efefef;box-sizing:border-box"></div>
<svg style="left:1613px;top:590px;" width="13" height="11" viewBox="0 0 13 11"><path d="M.5 6Q6.500-.500 12.500 6 6.500 11.500.5 6z" fill="#fff" stroke="#222" stroke-width="1"/><circle cx="6.500" cy="5.600" r="2.900" fill="#222"/><circle cx="5.600" cy="4.600" r=".9" fill="#ddd"/><path d="M.3 4.200Q6.500-2 12.700 4.200" fill="none" stroke="#333" stroke-width="1.100"/></svg>
<span class="t" style="left:1667.50px;top:586.86px;font-size:10.5px;line-height:21px;color:#fff;font-weight:bold;letter-spacing:-0.334px;">Blumen</span>
<div style="left:1607px;top:654px;width:291px;height:1px;background:#8f8f8f"></div>
<div style="left:1630px;top:615px;width:1px;height:40px;background:#9d9d9d"></div>
<div style="left:1631px;top:615px;width:1px;height:40px;background:#e9e9e9"></div>
<div style="left:1612px;top:627px;width:15px;height:15px;background:#dadada;border:1px solid #bdbdbd;border-right-color:#efefef;border-bottom-color:#efefef;box-sizing:border-box"></div>
<span class="t" style="left:1667.50px;top:625.86px;font-size:10.5px;line-height:21px;color:#111;letter-spacing:-0.517px;">Ebene 1</span>
<div style="left:1607px;top:693px;width:291px;height:1px;background:#8f8f8f"></div>
<div style="left:1630px;top:654px;width:1px;height:40px;background:#9d9d9d"></div>
<div style="left:1631px;top:654px;width:1px;height:40px;background:#e9e9e9"></div>
<div style="left:1612px;top:666px;width:15px;height:15px;background:#dadada;border:1px solid #bdbdbd;border-right-color:#efefef;border-bottom-color:#efefef;box-sizing:border-box"></div>
<svg style="left:1613px;top:668px;" width="13" height="11" viewBox="0 0 13 11"><path d="M.5 6Q6.500-.500 12.500 6 6.500 11.500.5 6z" fill="#fff" stroke="#222" stroke-width="1"/><circle cx="6.500" cy="5.600" r="2.900" fill="#222"/><circle cx="5.600" cy="4.600" r=".9" fill="#ddd"/><path d="M.3 4.200Q6.500-2 12.700 4.200" fill="none" stroke="#333" stroke-width="1.100"/></svg>
<span class="t" style="left:1667.50px;top:664.86px;font-size:10.5px;line-height:21px;color:#111;letter-spacing:-0.735px;">Metal_V1_1012</span>
<div style="left:1607px;top:732px;width:291px;height:1px;background:#8f8f8f"></div>
<div style="left:1630px;top:693px;width:1px;height:40px;background:#9d9d9d"></div>
<div style="left:1631px;top:693px;width:1px;height:40px;background:#e9e9e9"></div>
<div style="left:1612px;top:705px;width:15px;height:15px;background:#dadada;border:1px solid #bdbdbd;border-right-color:#efefef;border-bottom-color:#efefef;box-sizing:border-box"></div>
<svg style="left:1613px;top:707px;" width="13" height="11" viewBox="0 0 13 11"><path d="M.5 6Q6.500-.500 12.500 6 6.500 11.500.5 6z" fill="#fff" stroke="#222" stroke-width="1"/><circle cx="6.500" cy="5.600" r="2.900" fill="#222"/><circle cx="5.600" cy="4.600" r=".9" fill="#ddd"/><path d="M.3 4.200Q6.500-2 12.700 4.200" fill="none" stroke="#333" stroke-width="1.100"/></svg>
<span class="t" style="left:1667.50px;top:703.86px;font-size:10.5px;line-height:21px;color:#111;letter-spacing:-0.443px;">Meine Ebene</span>
<div style="left:1607px;top:771px;width:291px;height:1px;background:#8f8f8f"></div>
<div style="left:1630px;top:732px;width:1px;height:40px;background:#9d9d9d"></div>
<div style="left:1631px;top:732px;width:1px;height:40px;background:#e9e9e9"></div>
<div style="left:1612px;top:744px;width:15px;height:15px;background:#dadada;border:1px solid #bdbdbd;border-right-color:#efefef;border-bottom-color:#efefef;box-sizing:border-box"></div>
<svg style="left:1613px;top:746px;" width="13" height="11" viewBox="0 0 13 11"><path d="M.5 6Q6.500-.500 12.500 6 6.500 11.500.5 6z" fill="#fff" stroke="#222" stroke-width="1"/><circle cx="6.500" cy="5.600" r="2.900" fill="#222"/><circle cx="5.600" cy="4.600" r=".9" fill="#ddd"/><path d="M.3 4.200Q6.500-2 12.700 4.200" fill="none" stroke="#333" stroke-width="1.100"/></svg>
<span class="t" style="left:1667.50px;top:742.86px;font-size:10.5px;line-height:21px;color:#111;letter-spacing:-0.230px;">Vorlage</span>
<div style="left:1607px;top:576px;width:291px;height:1px;background:#8f8f8f"></div>
<div style="left:1634px;top:578px;width:26px;height:36px;background:#fff;border:1px solid #000;box-sizing:border-box"></div>
<svg style="left:1636px;top:580px;overflow:hidden" width="22" height="32" viewBox="0 0 22 32"><rect width="22" height="32" fill="#fff"/><rect x="4" y="0" width="4" height="4" fill="#cfcfcf"/><rect x="12" y="0" width="4" height="4" fill="#cfcfcf"/><rect x="20" y="0" width="4" height="4" fill="#cfcfcf"/><rect x="0" y="4" width="4" height="4" fill="#cfcfcf"/><rect x="8" y="4" width="4" height="4" fill="#cfcfcf"/><rect x="16" y="4" width="4" height="4" fill="#cfcfcf"/><rect x="4" y="8" width="4" height="4" fill="#cfcfcf"/><rect x="12" y="8" width="4" height="4" fill="#cfcfcf"/><rect x="20" y="8" width="4" height="4" fill="#cfcfcf"/><rect x="0" y="12" width="4" height="4" fill="#cfcfcf"/><rect x="8" y="12" width="4" height="4" fill="#cfcfcf"/><rect x="16" y="12" width="4" height="4" fill="#cfcfcf"/><rect x="4" y="16" width="4" height="4" fill="#cfcfcf"/><rect x="12" y="16" width="4" height="4" fill="#cfcfcf"/><rect x="20" y="16" width="4" height="4" fill="#cfcfcf"/><rect x="0" y="20" width="4" height="4" fill="#cfcfcf"/><rect x="8" y="20" width="4" height="4" fill="#cfcfcf"/><rect x="16" y="20" width="4" height="4" fill="#cfcfcf"/><rect x="4" y="24" width="4" height="4" fill="#cfcfcf"/><rect x="12" y="24" width="4" height="4" fill="#cfcfcf"/><rect x="20" y="24" width="4" height="4" fill="#cfcfcf"/><rect x="0" y="28" width="4" height="4" fill="#cfcfcf"/><rect x="8" y="28" width="4" height="4" fill="#cfcfcf"/><rect x="16" y="28" width="4" height="4" fill="#cfcfcf"/><rect x=".5" y=".5" width="21" height="31" fill="none" stroke="#000"/><path d="M16 5l-5 11" stroke="#b98" stroke-width="1.600" stroke-dasharray="1 1"/><path d="M10.500 15c3 .5 3.500 3 2.500 5 1.500 2.500 0 6-3.500 6.500-3.500.5-6-2-5-5 .5-2 2-2.500 2.500-4 .5-1.500 1.500-2.500 3.500-2.500z" fill="none" stroke="#a55" stroke-width="1.300" stroke-dasharray="1.200 .8"/></svg>
<svg style="left:1635px;top:618px;" width="24" height="34" viewBox="0 0 24 34"><rect x=".5" y=".5" width="23" height="33" fill="#fff" stroke="#000"/><rect x="11.300" y="3" width="1.600" height="14" fill="#5a3a22"/><rect x="10.600" y="2" width="3" height="3" fill="#333"/><path d="M12 15c2.200 0 3.300 1.500 3 3.300-.2 1.200.9 1.800 1.600 3.200 1.400 3-.6 6.200-4.600 6.200s-6-3.200-4.600-6.200c.7-1.400 1.800-2 1.600-3.200C8.700 16.500 9.800 15 12 15z" fill="#e8892a"/><circle cx="12" cy="20.500" r="1.400" fill="#3a2a1a"/><rect x="10.500" y="24" width="3" height="1" fill="#3a2a1a"/></svg>
<svg style="left:1635px;top:657px" width="24" height="34" viewBox="0 0 24 34"><rect x=".5" y=".5" width="23" height="33" fill="#b3776a" stroke="#000"/><path d="M3 6l5 9M14 4l-3 12M17 18l3 8" stroke="#a96c60" stroke-width=".8"/><path d="M11 18h13v16H11z" fill="#d6d6d6"/><path d="M10.500 34V17.500H24" fill="none" stroke="#000"/><path d="M13.500 20.500h5l2.500 2.500v8h-7.500z" fill="#fff" stroke="#333" stroke-width=".8"/><rect x="16" y="24" width="5" height="5" fill="#111"/><rect x="13" y="27" width="4.500" height="4.500" fill="#fff" stroke="#555" stroke-width=".5"/></svg>
<svg style="left:1635px;top:696px" width="24" height="34" viewBox="0 0 24 34"><defs><radialGradient id="gm"><stop offset="0" stop-color="#cdc27c"/><stop offset="1" stop-color="#b9ae5a"/></radialGradient></defs><rect x=".5" y=".5" width="23" height="33" fill="url(#gm)" stroke="#000"/></svg>
<svg style="left:1635px;top:735px;" width="24" height="34" viewBox="0 0 24 34"><rect x=".5" y=".5" width="23" height="33" fill="#fff" stroke="#000"/><rect x="21" y="15" width="1.500" height="3" fill="#d9a58c"/><rect x="12" y="29" width="1" height="2" fill="#777"/></svg>
<div style="left:1898px;top:576px;width:17px;height:418px;background:#ececec"></div>
<svg style="left:1902px;top:583px;" width="8" height="5" viewBox="0 0 8 5"><path d="M0 5L4 .5 8 5z" fill="#a9a9a9"/></svg>
<svg style="left:1902px;top:983px;" width="8" height="5" viewBox="0 0 8 5"><path d="M0 0L4 4.500 8 0z" fill="#a9a9a9"/></svg>
<div style="left:1607px;top:994px;width:308px;height:1px;background:#929292"></div>
<div style="left:1607px;top:995px;width:308px;height:17px;background:#d9d9d9"></div>
<svg style="left:1713px;top:998px;" width="20" height="9" viewBox="0 0 20 9"><rect x="1" y="1.500" width="10" height="5.500" rx="2.750" fill="none" stroke="#8a8a8a" stroke-width="1.500"/><rect x="8" y="1.500" width="10" height="5.500" rx="2.750" fill="none" stroke="#8a8a8a" stroke-width="1.500"/><path d="M5 4.250h9" stroke="#f4f4f4" stroke-width="1"/></svg>
<span class="t" style="left:1743px;top:992px;font-family:'Liberation Serif',serif;font-style:italic;font-weight:bold;font-size:15px;line-height:16px;color:#2a2a2a;letter-spacing:-1px;text-shadow:.5px 0 0 #2a2a2a">fx</span>
<svg style="left:1758px;top:1005px;" width="4" height="3" viewBox="0 0 4 3"><path d="M0 0h4L2 2.500z" fill="#111"/></svg>
<svg style="left:1770px;top:996px;" width="14" height="12" viewBox="0 0 14 12"><rect x=".5" y=".5" width="13" height="11" fill="#9a9a9a" stroke="#444"/><circle cx="7" cy="6" r="3.300" fill="#fff"/></svg>
<svg style="left:1798px;top:996px;" width="14" height="13" viewBox="0 0 14 13"><circle cx="6" cy="6" r="5.300" fill="#fff" stroke="#444" stroke-width="1"/><path d="M2.300 9.700A5.300 5.300 0 0 1 9.700 2.300z" fill="#333"/><path d="M10 10.500h4l-2 2.500z" fill="#111"/></svg>
<svg style="left:1825px;top:997px;" width="13" height="10" viewBox="0 0 13 10"><path d="M.5 9.500v-8h4l1 1.500h6.500v6.500z" fill="#f4f4f4" stroke="#555" stroke-width="1"/></svg>
<svg style="left:1853px;top:997px;" width="11" height="11" viewBox="0 0 11 11"><path d="M1.500 1.500h8v8h-8z" fill="#fff" stroke="#555" stroke-width="1"/><path d="M9.500 3v7h-7" fill="none" stroke="#222" stroke-width="1.600"/><path d="M4.500 5.500h3v3" fill="none" stroke="#333" stroke-width="1"/></svg>
<svg style="left:1880px;top:996px;" width="11" height="12" viewBox="0 0 11 12"><path d="M2 3.500h7l-.8 7.500H2.800z" fill="#eee" stroke="#444" stroke-width="1"/><path d="M1 3h9M4 1.500h3" stroke="#444" stroke-width="1.200"/><path d="M4.200 5v4.500M6.800 5v4.500" stroke="#555" stroke-width=".8"/></svg>
<div style="left:1607px;top:1012px;width:308px;height:3px;background:#3c3c3c"></div>
<div style="left:1607px;top:1015px;width:308px;height:17px;background:linear-gradient(#9f9f9f,#8e8e8e 50%,#858585)"></div><div style="left:1607px;top:1031px;width:308px;height:1px;background:#6f6f6f"></div><div style="left:1607px;top:1015px;width:50px;height:17px;background:linear-gradient(#eeeeee,#dedede 60%,#d6d6d6)"></div><span class="t" style="left:1614.00px;top:1013.36px;font-size:10.5px;line-height:21px;color:#2a2a2a;font-weight:bold;letter-spacing:-0.525px;text-shadow:0 0 .5px #666;">Zeichen</span><div style="left:1657px;top:1015px;width:46px;height:16px;background:linear-gradient(#9a9a9a,#8b8b8b);border-right:1px solid #6a6a6a;border-left:1px solid #a9a9a9;box-sizing:border-box"></div><span class="t" style="left:1665.00px;top:1013.36px;font-size:10.5px;line-height:21px;color:#2c2c2c;font-weight:bold;letter-spacing:-0.737px;text-shadow:0 1px 0 #aaa;">Absatz</span><svg style="left:1897px;top:1019px;" width="15" height="10" viewBox="0 0 15 10"><path d="M0 2.500h5L2.500 5.500z" fill="#2a2a2a"/><path d="M6.500 1.500h8M6.500 4h8M6.500 6.500h8M6.500 9h8" stroke="#2a2a2a" stroke-width="1.100"/></svg>
<div style="left:1607px;top:1032px;width:308px;height:3px;background:#d6d6d6"></div>
<!-- art -->
<div style="left:485px;top:116px;width:641px;height:893px;box-shadow:1px 1px 2px rgba(0,0,0,.55);background:#d9cd93"></div>
<svg style="left:485px;top:116px;overflow:hidden" width="641" height="893" viewBox="0 0 641 893"><defs><radialGradient id="paper" gradientUnits="userSpaceOnUse" cx="315" cy="424" r="520"><stop offset="0" stop-color="#e1d5ac"/><stop offset=".3" stop-color="#dccd9e"/><stop offset=".58" stop-color="#d4c38a"/><stop offset=".77" stop-color="#cfbb80"/><stop offset="1" stop-color="#ccb879"/></radialGradient><g id="daisy"><g transform="rotate(0)"><ellipse cx=".69" rx=".32" ry=".265"/></g><g transform="rotate(45)"><ellipse cx=".69" rx=".32" ry=".265"/></g><g transform="rotate(90)"><ellipse cx=".69" rx=".32" ry=".265"/></g><g transform="rotate(135)"><ellipse cx=".69" rx=".32" ry=".265"/></g><g transform="rotate(180)"><ellipse cx=".69" rx=".32" ry=".265"/></g><g transform="rotate(225)"><ellipse cx=".69" rx=".32" ry=".265"/></g><g transform="rotate(270)"><ellipse cx=".69" rx=".32" ry=".265"/></g><g transform="rotate(315)"><ellipse cx=".69" rx=".32" ry=".265"/></g><circle r=".5"/><circle r=".36" fill="#d8d2a4" opacity=".35"/><g stroke="#d8d2a4" stroke-width=".065" opacity=".9"><path d="M0.080 0.000L0.460 0.000"/><path d="M0.075 0.027L0.432 0.157"/><path d="M0.061 0.051L0.352 0.296"/><path d="M0.040 0.069L0.230 0.398"/><path d="M0.014 0.079L0.080 0.453"/><path d="M-0.014 0.079L-0.080 0.453"/><path d="M-0.040 0.069L-0.230 0.398"/><path d="M-0.061 0.051L-0.352 0.296"/><path d="M-0.075 0.027L-0.432 0.157"/><path d="M-0.080 0.000L-0.460 0.000"/><path d="M-0.075 -0.027L-0.432 -0.157"/><path d="M-0.061 -0.051L-0.352 -0.296"/><path d="M-0.040 -0.069L-0.230 -0.398"/><path d="M-0.014 -0.079L-0.080 -0.453"/><path d="M0.014 -0.079L0.080 -0.453"/><path d="M0.040 -0.069L0.230 -0.398"/><path d="M0.061 -0.051L0.352 -0.296"/><path d="M0.075 -0.027L0.432 -0.157"/></g><circle r=".1" fill="#d8d2a4"/></g><g id="dark8"><g transform="rotate(0)"><path d="M0 0C.3-.03.55-.28.8-.275.97-.24 1.020-.1 1.020 0 1.020 .1 .97.24.8.275.55.28.3.03 0 0z"/></g><g transform="rotate(45)"><path d="M0 0C.3-.03.55-.28.8-.275.97-.24 1.020-.1 1.020 0 1.020 .1 .97.24.8.275.55.28.3.03 0 0z"/></g><g transform="rotate(90)"><path d="M0 0C.3-.03.55-.28.8-.275.97-.24 1.020-.1 1.020 0 1.020 .1 .97.24.8.275.55.28.3.03 0 0z"/></g><g transform="rotate(135)"><path d="M0 0C.3-.03.55-.28.8-.275.97-.24 1.020-.1 1.020 0 1.020 .1 .97.24.8.275.55.28.3.03 0 0z"/></g><g transform="rotate(180)"><path d="M0 0C.3-.03.55-.28.8-.275.97-.24 1.020-.1 1.020 0 1.020 .1 .97.24.8.275.55.28.3.03 0 0z"/></g><g transform="rotate(225)"><path d="M0 0C.3-.03.55-.28.8-.275.97-.24 1.020-.1 1.020 0 1.020 .1 .97.24.8.275.55.28.3.03 0 0z"/></g><g transform="rotate(270)"><path d="M0 0C.3-.03.55-.28.8-.275.97-.24 1.020-.1 1.020 0 1.020 .1 .97.24.8.275.55.28.3.03 0 0z"/></g><g transform="rotate(315)"><path d="M0 0C.3-.03.55-.28.8-.275.97-.24 1.020-.1 1.020 0 1.020 .1 .97.24.8.275.55.28.3.03 0 0z"/></g><circle r=".5"/></g><g id="ring"><g transform="rotate(0)"><circle cx=".58" r=".42"/></g><g transform="rotate(60)"><circle cx=".58" r=".42"/></g><g transform="rotate(120)"><circle cx=".58" r=".42"/></g><g transform="rotate(180)"><circle cx=".58" r=".42"/></g><g transform="rotate(240)"><circle cx=".58" r=".42"/></g><g transform="rotate(300)"><circle cx=".58" r=".42"/></g><circle r=".6"/><g fill="#e3dcc0"><g transform="rotate(0)"><circle cx=".4" r=".27"/></g><g transform="rotate(60)"><circle cx=".4" r=".27"/></g><g transform="rotate(120)"><circle cx=".4" r=".27"/></g><g transform="rotate(180)"><circle cx=".4" r=".27"/></g><g transform="rotate(240)"><circle cx=".4" r=".27"/></g><g transform="rotate(300)"><circle cx=".4" r=".27"/></g><circle r=".4"/></g><circle r=".28"/></g><g id="round6"><g transform="rotate(0)"><path d="M0 0C.22-.06.42-.34.72-.33 .96-.3 1.020-.12 1.020 0 1.020 .12 .96.3.72.33.42.34.22.06 0 0z"/></g><g transform="rotate(60)"><path d="M0 0C.22-.06.42-.34.72-.33 .96-.3 1.020-.12 1.020 0 1.020 .12 .96.3.72.33.42.34.22.06 0 0z"/></g><g transform="rotate(120)"><path d="M0 0C.22-.06.42-.34.72-.33 .96-.3 1.020-.12 1.020 0 1.020 .12 .96.3.72.33.42.34.22.06 0 0z"/></g><g transform="rotate(180)"><path d="M0 0C.22-.06.42-.34.72-.33 .96-.3 1.020-.12 1.020 0 1.020 .12 .96.3.72.33.42.34.22.06 0 0z"/></g><g transform="rotate(240)"><path d="M0 0C.22-.06.42-.34.72-.33 .96-.3 1.020-.12 1.020 0 1.020 .12 .96.3.72.33.42.34.22.06 0 0z"/></g><g transform="rotate(300)"><path d="M0 0C.22-.06.42-.34.72-.33 .96-.3 1.020-.12 1.020 0 1.020 .12 .96.3.72.33.42.34.22.06 0 0z"/></g><circle r=".2"/><g stroke="#e0d6a9" stroke-width=".035" opacity=".8"><g transform="rotate(30)"><path d="M.04 0H.5"/></g><g transform="rotate(90)"><path d="M.04 0H.5"/></g><g transform="rotate(150)"><path d="M.04 0H.5"/></g><g transform="rotate(210)"><path d="M.04 0H.5"/></g><g transform="rotate(270)"><path d="M.04 0H.5"/></g><g transform="rotate(330)"><path d="M.04 0H.5"/></g></g></g><g id="star"><polygon points="0.000,-1.050 0.194,-0.267 0.999,-0.324 0.314,0.102 0.617,0.849 0.000,0.330 -0.617,0.849 -0.314,0.102 -0.999,-0.324 -0.194,-0.267"/><polygon points="0.000,-0.550 0.112,-0.154 0.523,-0.170 0.181,0.059 0.323,0.445 0.000,0.190 -0.323,0.445 -0.181,0.059 -0.523,-0.170 -0.112,-0.154" fill="none" stroke="#e0d6a9" stroke-width=".06" opacity=".75"/></g><g id="gold"><polygon points="0.970,0.000 0.494,0.285 0.485,0.840 0.000,0.570 -0.485,0.840 -0.494,0.285 -0.970,0.000 -0.494,-0.285 -0.485,-0.840 -0.000,-0.570 0.485,-0.840 0.494,-0.285" fill="#ece4be" fill-opacity=".8" stroke-width=".165" stroke-linejoin="round" style="stroke:currentColor"/><polygon points="0.660,0.000 0.346,0.200 0.330,0.572 0.000,0.400 -0.330,0.572 -0.346,0.200 -0.660,0.000 -0.346,-0.200 -0.330,-0.572 -0.000,-0.400 0.330,-0.572 0.346,-0.200" fill="none" stroke-width=".04" stroke-linejoin="round" style="stroke:currentColor" opacity=".25"/><polygon points="0.330,0.000 0.240,0.099 0.233,0.233 0.099,0.240 0.000,0.330 -0.099,0.240 -0.233,0.233 -0.240,0.099 -0.330,0.000 -0.240,-0.099 -0.233,-0.233 -0.099,-0.240 -0.000,-0.330 0.099,-0.240 0.233,-0.233 0.240,-0.099" style="fill:currentColor"/></g><g id="pointy"><g transform="rotate(0)"><path d="M0 0C.25-.1.5-.34.72-.3.9-.24 1-.1 1 0 1 .1.9.24.72.3.5.34.25.1 0 0z"/></g><g transform="rotate(60)"><path d="M0 0C.25-.1.5-.34.72-.3.9-.24 1-.1 1 0 1 .1.9.24.72.3.5.34.25.1 0 0z"/></g><g transform="rotate(120)"><path d="M0 0C.25-.1.5-.34.72-.3.9-.24 1-.1 1 0 1 .1.9.24.72.3.5.34.25.1 0 0z"/></g><g transform="rotate(180)"><path d="M0 0C.25-.1.5-.34.72-.3.9-.24 1-.1 1 0 1 .1.9.24.72.3.5.34.25.1 0 0z"/></g><g transform="rotate(240)"><path d="M0 0C.25-.1.5-.34.72-.3.9-.24 1-.1 1 0 1 .1.9.24.72.3.5.34.25.1 0 0z"/></g><g transform="rotate(300)"><path d="M0 0C.25-.1.5-.34.72-.3.9-.24 1-.1 1 0 1 .1.9.24.72.3.5.34.25.1 0 0z"/></g><g stroke="#e0d6a9" stroke-width=".04" opacity=".55"><g transform="rotate(0)"><path d="M.05 0H.55"/></g><g transform="rotate(60)"><path d="M.05 0H.55"/></g><g transform="rotate(120)"><path d="M.05 0H.55"/></g><g transform="rotate(180)"><path d="M.05 0H.55"/></g><g transform="rotate(240)"><path d="M.05 0H.55"/></g><g transform="rotate(300)"><path d="M.05 0H.55"/></g></g></g><g id="paddle8"><g transform="rotate(0)"><path d="M0 0C.3-.05.55-.27.8-.25.95-.21 1-.1 1 0 1 .1.95.21.8.25.55.27.3.05 0 0z"/></g><g transform="rotate(45)"><path d="M0 0C.3-.05.55-.27.8-.25.95-.21 1-.1 1 0 1 .1.95.21.8.25.55.27.3.05 0 0z"/></g><g transform="rotate(90)"><path d="M0 0C.3-.05.55-.27.8-.25.95-.21 1-.1 1 0 1 .1.95.21.8.25.55.27.3.05 0 0z"/></g><g transform="rotate(135)"><path d="M0 0C.3-.05.55-.27.8-.25.95-.21 1-.1 1 0 1 .1.95.21.8.25.55.27.3.05 0 0z"/></g><g transform="rotate(180)"><path d="M0 0C.3-.05.55-.27.8-.25.95-.21 1-.1 1 0 1 .1.95.21.8.25.55.27.3.05 0 0z"/></g><g transform="rotate(225)"><path d="M0 0C.3-.05.55-.27.8-.25.95-.21 1-.1 1 0 1 .1.95.21.8.25.55.27.3.05 0 0z"/></g><g transform="rotate(270)"><path d="M0 0C.3-.05.55-.27.8-.25.95-.21 1-.1 1 0 1 .1.95.21.8.25.55.27.3.05 0 0z"/></g><g transform="rotate(315)"><path d="M0 0C.3-.05.55-.27.8-.25.95-.21 1-.1 1 0 1 .1.95.21.8.25.55.27.3.05 0 0z"/></g><g stroke="#e0d6a9" stroke-width=".035" opacity=".6"><g transform="rotate(0)"><path d="M.05 0H.6"/></g><g transform="rotate(45)"><path d="M.05 0H.6"/></g><g transform="rotate(90)"><path d="M.05 0H.6"/></g><g transform="rotate(135)"><path d="M.05 0H.6"/></g><g transform="rotate(180)"><path d="M.05 0H.6"/></g><g transform="rotate(225)"><path d="M.05 0H.6"/></g><g transform="rotate(270)"><path d="M.05 0H.6"/></g><g transform="rotate(315)"><path d="M.05 0H.6"/></g></g></g><g id="pointy8"><g transform="rotate(0)"><path d="M0 0C.3-.06.5-.2.7-.18.88-.14 1-.05 1 0 1 .05.88.14.7.18.5.2.3.06 0 0z"/></g><g transform="rotate(45)"><path d="M0 0C.3-.06.5-.2.7-.18.88-.14 1-.05 1 0 1 .05.88.14.7.18.5.2.3.06 0 0z"/></g><g transform="rotate(90)"><path d="M0 0C.3-.06.5-.2.7-.18.88-.14 1-.05 1 0 1 .05.88.14.7.18.5.2.3.06 0 0z"/></g><g transform="rotate(135)"><path d="M0 0C.3-.06.5-.2.7-.18.88-.14 1-.05 1 0 1 .05.88.14.7.18.5.2.3.06 0 0z"/></g><g transform="rotate(180)"><path d="M0 0C.3-.06.5-.2.7-.18.88-.14 1-.05 1 0 1 .05.88.14.7.18.5.2.3.06 0 0z"/></g><g transform="rotate(225)"><path d="M0 0C.3-.06.5-.2.7-.18.88-.14 1-.05 1 0 1 .05.88.14.7.18.5.2.3.06 0 0z"/></g><g transform="rotate(270)"><path d="M0 0C.3-.06.5-.2.7-.18.88-.14 1-.05 1 0 1 .05.88.14.7.18.5.2.3.06 0 0z"/></g><g transform="rotate(315)"><path d="M0 0C.3-.06.5-.2.7-.18.88-.14 1-.05 1 0 1 .05.88.14.7.18.5.2.3.06 0 0z"/></g><circle r=".16" fill="#e0d6a9" opacity=".6"/></g><g id="narrow8"><g transform="rotate(0)"><ellipse cx=".58" rx=".44" ry=".17"/></g><g transform="rotate(45)"><ellipse cx=".58" rx=".44" ry=".17"/></g><g transform="rotate(90)"><ellipse cx=".58" rx=".44" ry=".17"/></g><g transform="rotate(135)"><ellipse cx=".58" rx=".44" ry=".17"/></g><g transform="rotate(180)"><ellipse cx=".58" rx=".44" ry=".17"/></g><g transform="rotate(225)"><ellipse cx=".58" rx=".44" ry=".17"/></g><g transform="rotate(270)"><ellipse cx=".58" rx=".44" ry=".17"/></g><g transform="rotate(315)"><ellipse cx=".58" rx=".44" ry=".17"/></g><circle r=".2" fill="#e0d6a9" opacity=".75"/><g stroke="#e0d6a9" stroke-width=".05" opacity=".7"><g transform="rotate(22.5)"><path d="M.2 0H.45"/></g><g transform="rotate(67.5)"><path d="M.2 0H.45"/></g><g transform="rotate(112.5)"><path d="M.2 0H.45"/></g><g transform="rotate(157.5)"><path d="M.2 0H.45"/></g><g transform="rotate(202.5)"><path d="M.2 0H.45"/></g><g transform="rotate(247.5)"><path d="M.2 0H.45"/></g><g transform="rotate(292.5)"><path d="M.2 0H.45"/></g><g transform="rotate(337.5)"><path d="M.2 0H.45"/></g></g></g><g id="lime"><g transform="rotate(0)"><path d="M.1-.03L.92-.155 1-.06 1 .06 .92.155 .1.03z"/></g><g transform="rotate(25.7143)"><path d="M.1-.03L.92-.155 1-.06 1 .06 .92.155 .1.03z"/></g><g transform="rotate(51.4286)"><path d="M.1-.03L.92-.155 1-.06 1 .06 .92.155 .1.03z"/></g><g transform="rotate(77.1429)"><path d="M.1-.03L.92-.155 1-.06 1 .06 .92.155 .1.03z"/></g><g transform="rotate(102.857)"><path d="M.1-.03L.92-.155 1-.06 1 .06 .92.155 .1.03z"/></g><g transform="rotate(128.571)"><path d="M.1-.03L.92-.155 1-.06 1 .06 .92.155 .1.03z"/></g><g transform="rotate(154.286)"><path d="M.1-.03L.92-.155 1-.06 1 .06 .92.155 .1.03z"/></g><g transform="rotate(180)"><path d="M.1-.03L.92-.155 1-.06 1 .06 .92.155 .1.03z"/></g><g transform="rotate(205.714)"><path d="M.1-.03L.92-.155 1-.06 1 .06 .92.155 .1.03z"/></g><g transform="rotate(231.429)"><path d="M.1-.03L.92-.155 1-.06 1 .06 .92.155 .1.03z"/></g><g transform="rotate(257.143)"><path d="M.1-.03L.92-.155 1-.06 1 .06 .92.155 .1.03z"/></g><g transform="rotate(282.857)"><path d="M.1-.03L.92-.155 1-.06 1 .06 .92.155 .1.03z"/></g><g transform="rotate(308.571)"><path d="M.1-.03L.92-.155 1-.06 1 .06 .92.155 .1.03z"/></g><g transform="rotate(334.286)"><path d="M.1-.03L.92-.155 1-.06 1 .06 .92.155 .1.03z"/></g><circle r=".34"/><g stroke="#b7e07a" stroke-width=".05"><g transform="rotate(12.8571)"><path d="M.12 0H.6"/></g><g transform="rotate(38.5714)"><path d="M.12 0H.6"/></g><g transform="rotate(64.2857)"><path d="M.12 0H.6"/></g><g transform="rotate(90)"><path d="M.12 0H.6"/></g><g transform="rotate(115.714)"><path d="M.12 0H.6"/></g><g transform="rotate(141.429)"><path d="M.12 0H.6"/></g><g transform="rotate(167.143)"><path d="M.12 0H.6"/></g><g transform="rotate(192.857)"><path d="M.12 0H.6"/></g><g transform="rotate(218.571)"><path d="M.12 0H.6"/></g><g transform="rotate(244.286)"><path d="M.12 0H.6"/></g><g transform="rotate(270)"><path d="M.12 0H.6"/></g><g transform="rotate(295.714)"><path d="M.12 0H.6"/></g><g transform="rotate(321.429)"><path d="M.12 0H.6"/></g><g transform="rotate(347.143)"><path d="M.12 0H.6"/></g></g><circle r=".1" fill="#c7e59a"/></g><g id="five"><g transform="rotate(-90)"><circle cx=".6" r=".41"/></g><g transform="rotate(-18)"><circle cx=".6" r=".41"/></g><g transform="rotate(54)"><circle cx=".6" r=".41"/></g><g transform="rotate(126)"><circle cx=".6" r=".41"/></g><g transform="rotate(198)"><circle cx=".6" r=".41"/></g><circle r=".45"/><g fill="#ecd9a2"><g transform="rotate(-90)"><circle cx=".33" r=".19"/></g><g transform="rotate(-18)"><circle cx=".33" r=".19"/></g><g transform="rotate(54)"><circle cx=".33" r=".19"/></g><g transform="rotate(126)"><circle cx=".33" r=".19"/></g><g transform="rotate(198)"><circle cx=".33" r=".19"/></g></g><circle r=".15"/></g><g id="teal5"><g transform="rotate(-90)"><circle cx=".6" r=".41"/></g><g transform="rotate(-18)"><circle cx=".6" r=".41"/></g><g transform="rotate(54)"><circle cx=".6" r=".41"/></g><g transform="rotate(126)"><circle cx=".6" r=".41"/></g><g transform="rotate(198)"><circle cx=".6" r=".41"/></g><circle r=".45"/><g fill="#e6dcb0"><g transform="rotate(-90)"><circle cx=".33" r=".2"/></g><g transform="rotate(-18)"><circle cx=".33" r=".2"/></g><g transform="rotate(54)"><circle cx=".33" r=".2"/></g><g transform="rotate(126)"><circle cx=".33" r=".2"/></g><g transform="rotate(198)"><circle cx=".33" r=".2"/></g><circle r=".2"/></g></g><g id="berry"><g transform="rotate(0)"><circle cx=".62" r=".4"/></g><g transform="rotate(60)"><circle cx=".62" r=".4"/></g><g transform="rotate(120)"><circle cx=".62" r=".4"/></g><g transform="rotate(180)"><circle cx=".62" r=".4"/></g><g transform="rotate(240)"><circle cx=".62" r=".4"/></g><g transform="rotate(300)"><circle cx=".62" r=".4"/></g><circle r=".5"/><g fill="#f3cfd9"><g transform="rotate(0)"><circle cx=".6" r=".19"/></g><g transform="rotate(60)"><circle cx=".6" r=".19"/></g><g transform="rotate(120)"><circle cx=".6" r=".19"/></g><g transform="rotate(180)"><circle cx=".6" r=".19"/></g><g transform="rotate(240)"><circle cx=".6" r=".19"/></g><g transform="rotate(300)"><circle cx=".6" r=".19"/></g><circle r=".17"/></g></g><g id="out5" fill="none" stroke-width=".15" style="stroke:currentColor"><g transform="rotate(-90)"><ellipse cx=".58" rx=".4" ry=".21"/><path d="M.2 0H.7" stroke-width=".06"/></g><g transform="rotate(-18)"><ellipse cx=".58" rx=".4" ry=".21"/><path d="M.2 0H.7" stroke-width=".06"/></g><g transform="rotate(54)"><ellipse cx=".58" rx=".4" ry=".21"/><path d="M.2 0H.7" stroke-width=".06"/></g><g transform="rotate(126)"><ellipse cx=".58" rx=".4" ry=".21"/><path d="M.2 0H.7" stroke-width=".06"/></g><g transform="rotate(198)"><ellipse cx=".58" rx=".4" ry=".21"/><path d="M.2 0H.7" stroke-width=".06"/></g><circle r=".1" style="fill:currentColor"/></g><g id="olive"><g transform="rotate(0)"><circle cx=".66" r=".32"/></g><g transform="rotate(60)"><circle cx=".66" r=".32"/></g><g transform="rotate(120)"><circle cx=".66" r=".32"/></g><g transform="rotate(180)"><circle cx=".66" r=".32"/></g><g transform="rotate(240)"><circle cx=".66" r=".32"/></g><g transform="rotate(300)"><circle cx=".66" r=".32"/></g></g><g id="maroon"><g fill="#f0dcc8" fill-opacity=".55" stroke-width=".13" style="stroke:currentColor"><g transform="rotate(0)"><circle cx=".62" r=".3"/></g><g transform="rotate(60)"><circle cx=".62" r=".3"/></g><g transform="rotate(120)"><circle cx=".62" r=".3"/></g><g transform="rotate(180)"><circle cx=".62" r=".3"/></g><g transform="rotate(240)"><circle cx=".62" r=".3"/></g><g transform="rotate(300)"><circle cx=".62" r=".3"/></g></g><circle r=".24" style="fill:currentColor"/></g><g id="thin"><g fill="none" stroke-width=".095" style="stroke:currentColor"><g transform="rotate(0)"><ellipse cx=".6" rx=".4" ry=".16"/></g><g transform="rotate(45)"><ellipse cx=".6" rx=".4" ry=".16"/></g><g transform="rotate(90)"><ellipse cx=".6" rx=".4" ry=".16"/></g><g transform="rotate(135)"><ellipse cx=".6" rx=".4" ry=".16"/></g><g transform="rotate(180)"><ellipse cx=".6" rx=".4" ry=".16"/></g><g transform="rotate(225)"><ellipse cx=".6" rx=".4" ry=".16"/></g><g transform="rotate(270)"><ellipse cx=".6" rx=".4" ry=".16"/></g><g transform="rotate(315)"><ellipse cx=".6" rx=".4" ry=".16"/></g></g><circle r=".2" fill="#dc2832"/></g><g id="green8"><polygon points="0.920,0.000 0.536,0.222 0.651,0.651 0.222,0.536 0.000,0.920 -0.222,0.536 -0.651,0.651 -0.536,0.222 -0.920,0.000 -0.536,-0.222 -0.651,-0.651 -0.222,-0.536 -0.000,-0.920 0.222,-0.536 0.651,-0.651 0.536,-0.222" stroke-width=".12" stroke-linejoin="round" style="stroke:currentColor"/><circle r=".3" fill="#dcd49a"/></g><g id="smallp"><g transform="rotate(0)"><path d="M0 0C.25-.1.45-.32.68-.27L1.050 0 .68.27C.45.32.25.1 0 0z"/></g><g transform="rotate(60)"><path d="M0 0C.25-.1.45-.32.68-.27L1.050 0 .68.27C.45.32.25.1 0 0z"/></g><g transform="rotate(120)"><path d="M0 0C.25-.1.45-.32.68-.27L1.050 0 .68.27C.45.32.25.1 0 0z"/></g><g transform="rotate(180)"><path d="M0 0C.25-.1.45-.32.68-.27L1.050 0 .68.27C.45.32.25.1 0 0z"/></g><g transform="rotate(240)"><path d="M0 0C.25-.1.45-.32.68-.27L1.050 0 .68.27C.45.32.25.1 0 0z"/></g><g transform="rotate(300)"><path d="M0 0C.25-.1.45-.32.68-.27L1.050 0 .68.27C.45.32.25.1 0 0z"/></g><g stroke="#f0e6c8" stroke-width=".07" opacity=".7"><g transform="rotate(0)"><path d="M.1 0H.7"/></g><g transform="rotate(60)"><path d="M.1 0H.7"/></g><g transform="rotate(120)"><path d="M.1 0H.7"/></g><g transform="rotate(180)"><path d="M.1 0H.7"/></g><g transform="rotate(240)"><path d="M.1 0H.7"/></g><g transform="rotate(300)"><path d="M.1 0H.7"/></g></g></g><g id="outp" fill="none" stroke-width=".1" style="stroke:currentColor"><g transform="rotate(0)"><path d="M0 0C.3-.06.5-.2.7-.18.88-.14 1-.05 1 0 1 .05.88.14.7.18.5.2.3.06 0 0z" transform="scale(1 1.400)"/></g><g transform="rotate(60)"><path d="M0 0C.3-.06.5-.2.7-.18.88-.14 1-.05 1 0 1 .05.88.14.7.18.5.2.3.06 0 0z" transform="scale(1 1.400)"/></g><g transform="rotate(120)"><path d="M0 0C.3-.06.5-.2.7-.18.88-.14 1-.05 1 0 1 .05.88.14.7.18.5.2.3.06 0 0z" transform="scale(1 1.400)"/></g><g transform="rotate(180)"><path d="M0 0C.3-.06.5-.2.7-.18.88-.14 1-.05 1 0 1 .05.88.14.7.18.5.2.3.06 0 0z" transform="scale(1 1.400)"/></g><g transform="rotate(240)"><path d="M0 0C.3-.06.5-.2.7-.18.88-.14 1-.05 1 0 1 .05.88.14.7.18.5.2.3.06 0 0z" transform="scale(1 1.400)"/></g><g transform="rotate(300)"><path d="M0 0C.3-.06.5-.2.7-.18.88-.14 1-.05 1 0 1 .05.88.14.7.18.5.2.3.06 0 0z" transform="scale(1 1.400)"/></g></g><g id="pale"><g transform="rotate(0)"><circle cx=".6" r=".36"/></g><g transform="rotate(60)"><circle cx=".6" r=".36"/></g><g transform="rotate(120)"><circle cx=".6" r=".36"/></g><g transform="rotate(180)"><circle cx=".6" r=".36"/></g><g transform="rotate(240)"><circle cx=".6" r=".36"/></g><g transform="rotate(300)"><circle cx=".6" r=".36"/></g><circle r=".4"/><circle r=".2" fill="#e0d6a9" opacity=".6"/></g><g id="tiny"><polygon points="1.000,0.000 0.260,0.150 0.500,0.866 0.000,0.300 -0.500,0.866 -0.260,0.150 -1.000,0.000 -0.260,-0.150 -0.500,-0.866 -0.000,-0.300 0.500,-0.866 0.260,-0.150"/></g></defs><rect x="0" y="0" width="641" height="893" fill="url(#paper)"/><use href="#five" fill="#e2512e" color="#e2512e" transform="translate(484.8 50.0) scale(5.50) rotate(30)"/><use href="#five" fill="#e2512e" color="#e2512e" transform="translate(476.8 68.8) scale(5.50) rotate(15)"/><use href="#five" fill="#e2512e" color="#e2512e" transform="translate(468.5 86.9) scale(5.50) rotate(40)"/><use href="#five" fill="#e2512e" color="#e2512e" transform="translate(547.5 85.7) scale(5.50) rotate(0)"/><use href="#five" fill="#e2512e" color="#e2512e" transform="translate(537.0 101.9) scale(5.50) rotate(10)"/><use href="#five" fill="#e2512e" color="#e2512e" transform="translate(526.4 119.2) scale(5.50) rotate(10)"/><use href="#olive" fill="#84844a" color="#84844a" transform="translate(544.0 65.0) scale(8.00) rotate(30)"/><use href="#out5" fill="#a9cfdc" color="#a9cfdc" transform="translate(497.3 122.0) scale(11.00) rotate(0)"/><use href="#gold" fill="#e8b014" color="#e8b014" transform="translate(489.2 97.3) scale(16.50) rotate(20)"/><use href="#lime" fill="#7dc030" color="#7dc030" transform="translate(516.9 92.0) scale(15.60) rotate(0)"/><use href="#daisy" fill="#2a8458" color="#2a8458" transform="translate(514.6 56.9) scale(22.50) rotate(10)"/><use href="#berry" fill="#d8288c" color="#d8288c" transform="translate(494.4 77.3) scale(7.80) rotate(40)"/><use href="#berry" fill="#d8288c" color="#d8288c" transform="translate(535.2 77.0) scale(7.80) rotate(40)"/><use href="#berry" fill="#d8288c" color="#d8288c" transform="translate(508.8 112.3) scale(7.80) rotate(10)"/><use href="#five" fill="#e2512e" color="#e2512e" transform="translate(480.8 138.0) scale(16.00) rotate(20)"/><use href="#pointy" fill="#8c8c87" color="#8c8c87" transform="translate(467.5 160.0) scale(16.00) rotate(10)"/><use href="#berry" fill="#d8288c" color="#d8288c" transform="translate(473.0 175.5) scale(7.80) rotate(40)"/><use href="#daisy" fill="#2a8458" color="#2a8458" transform="translate(453.0 185.3) scale(18.00) rotate(0)"/><use href="#out5" fill="#a9cfdc" color="#a9cfdc" transform="translate(456.5 210.0) scale(9.50) rotate(10)"/><use href="#star" fill="#8c1496" color="#8c1496" transform="translate(438.0 206.7) scale(15.00) rotate(20)"/><use href="#pointy8" fill="#f2aa96" color="#f2aa96" transform="translate(437.0 236.0) scale(14.00) rotate(0)"/><use href="#narrow8" fill="#d40f8c" color="#d40f8c" transform="translate(429.2 219.3) scale(16.00) rotate(40)"/><use href="#olive" fill="#84844a" color="#84844a" transform="translate(414.0 233.3) scale(8.00) rotate(0)"/><use href="#tiny" fill="#9a9a90" color="#9a9a90" transform="translate(438.0 251.5) scale(5.00) rotate(20)"/><use href="#daisy" fill="#e2512e" color="#e2512e" transform="translate(413.8 260.0) scale(20.80) rotate(0)"/><use href="#tiny" fill="#9a9a90" color="#9a9a90" transform="translate(405.0 310.0) scale(5.00) rotate(15)"/><use href="#ring" fill="#2d6ec8" color="#2d6ec8" transform="translate(395.6 291.3) scale(19.00) rotate(25)"/><use href="#gold" fill="#e8b014" color="#e8b014" transform="translate(384.5 316.3) scale(18.50) rotate(40)"/><use href="#berry" fill="#d8288c" color="#d8288c" transform="translate(393.6 333.0) scale(7.80) rotate(15)"/><use href="#five" fill="#e2512e" color="#e2512e" transform="translate(361.2 336.7) scale(16.00) rotate(10)"/><use href="#olive" fill="#84844a" color="#84844a" transform="translate(380.6 347.0) scale(8.50) rotate(25)"/><use href="#pointy8" fill="#f7dc12" color="#f7dc12" transform="translate(272.9 342.7) scale(15.50) rotate(15)"/><use href="#out5" fill="#6bb6e0" color="#6bb6e0" transform="translate(296.0 345.0) scale(11.00) rotate(10)"/><use href="#berry" fill="#d8288c" color="#d8288c" transform="translate(312.0 347.2) scale(7.80) rotate(20)"/><use href="#five" fill="#e2512e" color="#e2512e" transform="translate(326.0 356.4) scale(11.00) rotate(30)"/><use href="#lime" fill="#7dc030" color="#7dc030" transform="translate(307.8 368.2) scale(15.00) rotate(10)"/><use href="#dark8" fill="#22581c" color="#22581c" transform="translate(245.2 364.6) scale(21.00) rotate(10)"/><use href="#daisy" fill="#2a8458" color="#2a8458" transform="translate(280.4 375.0) scale(17.30) rotate(0)"/><use href="#maroon" fill="#962846" color="#962846" transform="translate(329.3 374.9) scale(8.00) rotate(20)"/><use href="#dark8" fill="#22581c" color="#22581c" transform="translate(355.2 366.7) scale(20.80) rotate(50)"/><use href="#ring" fill="#2d6ec8" color="#2d6ec8" transform="translate(227.3 396.9) scale(19.00) rotate(40)"/><use href="#pointy" fill="#8c8c87" color="#8c8c87" transform="translate(257.3 398.6) scale(15.00) rotate(30)"/><use href="#olive" fill="#84844a" color="#84844a" transform="translate(282.0 397.5) scale(8.50) rotate(50)"/><use href="#star" fill="#8c1496" color="#8c1496" transform="translate(307.4 392.9) scale(16.00) rotate(50)"/><use href="#maroon" fill="#962846" color="#962846" transform="translate(293.6 405.5) scale(8.00) rotate(30)"/><use href="#smallp" fill="#ad4128" color="#ad4128" transform="translate(379.4 386.3) scale(10.50) rotate(25)"/><use href="#narrow8" fill="#dc6432" color="#dc6432" transform="translate(333.5 394.0) scale(17.00) rotate(20)"/><use href="#pointy8" fill="#f7dc12" color="#f7dc12" transform="translate(365.6 412.8) scale(14.00) rotate(15)"/><use href="#round6" fill="#e0109a" color="#e0109a" transform="translate(357.0 394.4) scale(14.50) rotate(20)"/><use href="#berry" fill="#d8288c" color="#d8288c" transform="translate(270.6 411.3) scale(7.80) rotate(10)"/><use href="#pointy8" fill="#f2aa96" color="#f2aa96" transform="translate(311.0 416.5) scale(15.00) rotate(25)"/><use href="#five" fill="#e2512e" color="#e2512e" transform="translate(286.0 423.4) scale(11.00) rotate(50)"/><use href="#smallp" fill="#ad4128" color="#ad4128" transform="translate(212.9 421.7) scale(10.50) rotate(30)"/><use href="#daisy" fill="#2a8458" color="#2a8458" transform="translate(396.0 407.6) scale(17.00) rotate(50)"/><use href="#out5" fill="#3c9bd2" color="#3c9bd2" transform="translate(421.0 416.0) scale(11.50) rotate(25)"/><use href="#maroon" fill="#962846" color="#962846" transform="translate(378.6 423.2) scale(8.00) rotate(10)"/><use href="#paddle8" fill="#b7b29c" color="#b7b29c" transform="translate(236.0 435.5) scale(21.50) rotate(10)"/><use href="#pointy8" fill="#f7dc12" color="#f7dc12" transform="translate(264.7 434.0) scale(13.50) rotate(40)"/><use href="#star" fill="#8c1496" color="#8c1496" transform="translate(204.0 441.8) scale(15.00) rotate(15)"/><use href="#daisy" fill="#e2512e" color="#e2512e" transform="translate(337.0 428.0) scale(15.80) rotate(30)"/><use href="#daisy" fill="#a0149b" color="#a0149b" transform="translate(364.6 439.4) scale(16.40) rotate(15)"/><use href="#thin" fill="#ea9a84" color="#ea9a84" transform="translate(403.3 432.5) scale(12.00) rotate(50)"/><use href="#pointy8" fill="#f2aa96" color="#f2aa96" transform="translate(429.2 433.0) scale(15.00) rotate(40)"/><use href="#pointy" fill="#8c8c87" color="#8c8c87" transform="translate(388.3 449.8) scale(15.00) rotate(0)"/><use href="#five" fill="#e2512e" color="#e2512e" transform="translate(424.0 457.3) scale(16.00) rotate(10)"/><use href="#berry" fill="#d8288c" color="#d8288c" transform="translate(213.7 456.0) scale(7.80) rotate(30)"/><use href="#five" fill="#e2512e" color="#e2512e" transform="translate(186.5 463.6) scale(15.50) rotate(30)"/><use href="#green8" fill="#32a03c" color="#32a03c" transform="translate(205.6 468.0) scale(9.50) rotate(30)"/><use href="#smallp" fill="#ad4128" color="#ad4128" transform="translate(254.0 464.0) scale(10.50) rotate(50)"/><use href="#round6" fill="#e0109a" color="#e0109a" transform="translate(235.0 467.7) scale(14.70) rotate(50)"/><use href="#smallp" fill="#149f96" color="#149f96" transform="translate(346.7 460.7) scale(10.50) rotate(10)"/><use href="#pointy8" fill="#f7dc12" color="#f7dc12" transform="translate(387.7 471.7) scale(10.00) rotate(10)"/><use href="#narrow8" fill="#dc6432" color="#dc6432" transform="translate(367.0 468.2) scale(17.00) rotate(25)"/><use href="#berry" fill="#d8288c" color="#d8288c" transform="translate(402.7 464.8) scale(7.80) rotate(50)"/><use href="#berry" fill="#d8288c" color="#d8288c" transform="translate(346.0 481.5) scale(7.80) rotate(10)"/><use href="#smallp" fill="#149f96" color="#149f96" transform="translate(400.4 480.3) scale(10.50) rotate(0)"/><use href="#smallp" fill="#ad4128" color="#ad4128" transform="translate(419.4 479.2) scale(10.50) rotate(25)"/><use href="#green8" fill="#32a03c" color="#32a03c" transform="translate(377.3 484.4) scale(9.50) rotate(50)"/><use href="#pointy8" fill="#f2aa96" color="#f2aa96" transform="translate(162.9 481.5) scale(14.50) rotate(25)"/><use href="#smallp" fill="#149f96" color="#149f96" transform="translate(203.8 482.7) scale(10.00) rotate(40)"/><use href="#out5" fill="#6bb6e0" color="#6bb6e0" transform="translate(254.0 486.7) scale(11.00) rotate(30)"/><use href="#ring" fill="#50b0e6" color="#50b0e6" transform="translate(232.0 489.0) scale(12.70) rotate(0)"/><use href="#olive" fill="#84844a" color="#84844a" transform="translate(263.8 497.7) scale(9.00) rotate(50)"/><use href="#ring" fill="#50b0e6" color="#50b0e6" transform="translate(187.7 497.0) scale(13.00) rotate(30)"/><use href="#round6" fill="#e0109a" color="#e0109a" transform="translate(207.3 501.7) scale(14.00) rotate(15)"/><use href="#thin" fill="#ea9a84" color="#ea9a84" transform="translate(409.6 497.0) scale(12.00) rotate(10)"/><use href="#five" fill="#e2512e" color="#e2512e" transform="translate(391.2 497.7) scale(10.50) rotate(50)"/><use href="#smallp" fill="#ad4128" color="#ad4128" transform="translate(339.8 498.8) scale(9.50) rotate(0)"/><use href="#teal5" fill="#1eaa91" color="#1eaa91" transform="translate(364.0 501.7) scale(18.50) rotate(20)"/><use href="#maroon" fill="#962846" color="#962846" transform="translate(326.0 509.1) scale(8.00) rotate(25)"/><use href="#gold" fill="#e8b014" color="#e8b014" transform="translate(142.0 502.3) scale(17.50) rotate(15)"/><use href="#thin" fill="#ea9a84" color="#ea9a84" transform="translate(168.0 511.5) scale(12.00) rotate(20)"/><use href="#daisy" fill="#2a8458" color="#2a8458" transform="translate(224.0 513.8) scale(16.50) rotate(40)"/><use href="#gold" fill="#e8b014" color="#e8b014" transform="translate(250.6 521.9) scale(16.50) rotate(40)"/><use href="#five" fill="#e2512e" color="#e2512e" transform="translate(278.3 519.6) scale(15.30) rotate(50)"/><use href="#gold" fill="#e8b014" color="#e8b014" transform="translate(308.0 527.5) scale(17.00) rotate(10)"/><use href="#olive" fill="#84844a" color="#84844a" transform="translate(392.3 517.8) scale(9.00) rotate(15)"/><use href="#five" fill="#e2512e" color="#e2512e" transform="translate(191.0 522.0) scale(10.00) rotate(50)"/><use href="#olive" fill="#84844a" color="#84844a" transform="translate(149.6 531.0) scale(9.00) rotate(40)"/><use href="#out5" fill="#a9cfdc" color="#a9cfdc" transform="translate(168.7 529.4) scale(11.00) rotate(25)"/><use href="#dark8" fill="#22581c" color="#22581c" transform="translate(118.5 527.0) scale(21.30) rotate(15)"/><use href="#pale" fill="#f2a5b0" color="#f2a5b0" transform="translate(367.7 528.4) scale(8.00) rotate(40)"/><use href="#pale" fill="#f2a5b0" color="#f2a5b0" transform="translate(331.0 523.6) scale(8.00) rotate(25)"/><use href="#maroon" fill="#962846" color="#962846" transform="translate(386.7 529.6) scale(7.50) rotate(40)"/><use href="#five" fill="#e2512e" color="#e2512e" transform="translate(344.9 535.0) scale(11.00) rotate(30)"/><use href="#outp" fill="#cf3a86" color="#cf3a86" transform="translate(384.0 540.0) scale(12.00) rotate(40)"/><use href="#pale" fill="#f2a5b0" color="#f2a5b0" transform="translate(185.0 542.8) scale(8.00) rotate(20)"/><use href="#lime" fill="#7dc030" color="#7dc030" transform="translate(210.5 537.5) scale(15.00) rotate(15)"/><use href="#narrow8" fill="#d40f8c" color="#d40f8c" transform="translate(231.0 544.0) scale(15.00) rotate(10)"/><use href="#paddle8" fill="#b7b29c" color="#b7b29c" transform="translate(258.8 551.0) scale(20.00) rotate(15)"/><use href="#ring" fill="#50b0e6" color="#50b0e6" transform="translate(292.7 544.6) scale(12.50) rotate(15)"/><use href="#pointy8" fill="#f7dc12" color="#f7dc12" transform="translate(374.2 548.8) scale(14.00) rotate(20)"/><use href="#lime" fill="#7dc030" color="#7dc030" transform="translate(326.5 550.0) scale(15.50) rotate(20)"/><use href="#narrow8" fill="#d40f8c" color="#d40f8c" transform="translate(354.6 554.6) scale(15.50) rotate(0)"/><use href="#daisy" fill="#2a8458" color="#2a8458" transform="translate(92.7 551.3) scale(17.60) rotate(50)"/><use href="#teal5" fill="#1eaa91" color="#1eaa91" transform="translate(151.5 555.3) scale(18.20) rotate(15)"/><use href="#lime" fill="#7dc030" color="#7dc030" transform="translate(117.0 560.0) scale(15.50) rotate(25)"/><use href="#smallp" fill="#149f96" color="#149f96" transform="translate(178.0 558.0) scale(10.00) rotate(25)"/><use href="#narrow8" fill="#dc6432" color="#dc6432" transform="translate(204.4 562.3) scale(17.00) rotate(0)"/><use href="#five" fill="#e2512e" color="#e2512e" transform="translate(235.6 567.5) scale(10.00) rotate(15)"/><use href="#star" fill="#8c1496" color="#8c1496" transform="translate(278.3 565.7) scale(15.00) rotate(40)"/><use href="#olive" fill="#84844a" color="#84844a" transform="translate(299.6 564.6) scale(9.00) rotate(30)"/><use href="#out5" fill="#3c9bd2" color="#3c9bd2" transform="translate(374.2 571.9) scale(12.00) rotate(30)"/><use href="#smallp" fill="#ad4128" color="#ad4128" transform="translate(76.0 570.3) scale(10.00) rotate(15)"/><use href="#star" fill="#8c1496" color="#8c1496" transform="translate(136.0 573.2) scale(15.00) rotate(0)"/><use href="#narrow8" fill="#d40f8c" color="#d40f8c" transform="translate(92.0 584.2) scale(16.00) rotate(50)"/><use href="#round6" fill="#e0109a" color="#e0109a" transform="translate(117.5 584.2) scale(16.00) rotate(40)"/><use href="#daisy" fill="#a0149b" color="#a0149b" transform="translate(184.0 580.0) scale(16.50) rotate(40)"/><use href="#thin" fill="#ea9a84" color="#ea9a84" transform="translate(215.4 578.4) scale(11.00) rotate(40)"/><use href="#berry" fill="#d8288c" color="#d8288c" transform="translate(260.4 584.2) scale(7.80) rotate(40)"/><use href="#round6" fill="#e0109a" color="#e0109a" transform="translate(315.5 577.3) scale(14.50) rotate(10)"/><use href="#gold" fill="#e8b014" color="#e8b014" transform="translate(347.0 579.4) scale(17.50) rotate(50)"/><use href="#star" fill="#8c1496" color="#8c1496" transform="translate(373.0 592.0) scale(15.00) rotate(40)"/><use href="#pointy8" fill="#f2aa96" color="#f2aa96" transform="translate(152.7 591.7) scale(15.00) rotate(0)"/><use href="#pointy" fill="#8c8c87" color="#8c8c87" transform="translate(70.2 596.3) scale(15.50) rotate(20)"/><use href="#gold" fill="#e8b014" color="#e8b014" transform="translate(237.9 594.0) scale(17.50) rotate(10)"/><use href="#ring" fill="#2d6ec8" color="#2d6ec8" transform="translate(287.5 592.8) scale(19.00) rotate(20)"/><use href="#green8" fill="#32a03c" color="#32a03c" transform="translate(313.0 596.8) scale(9.50) rotate(50)"/><use href="#out5" fill="#a9cfdc" color="#a9cfdc" transform="translate(336.0 599.0) scale(10.00) rotate(15)"/><use href="#green8" fill="#32a03c" color="#32a03c" transform="translate(129.6 599.8) scale(9.50) rotate(10)"/><use href="#green8" fill="#32a03c" color="#32a03c" transform="translate(91.0 606.7) scale(9.50) rotate(30)"/><use href="#gold" fill="#e8b014" color="#e8b014" transform="translate(178.2 607.8) scale(17.00) rotate(0)"/><use href="#pointy" fill="#8c8c87" color="#8c8c87" transform="translate(208.5 604.4) scale(15.00) rotate(10)"/><use href="#thin" fill="#ea9a84" color="#ea9a84" transform="translate(117.0 614.0) scale(12.00) rotate(0)"/><use href="#outp" fill="#cf3a86" color="#cf3a86" transform="translate(250.0 613.6) scale(11.00) rotate(15)"/><use href="#pointy8" fill="#f2aa96" color="#f2aa96" transform="translate(299.6 619.4) scale(15.00) rotate(10)"/><use href="#paddle8" fill="#b7b29c" color="#b7b29c" transform="translate(145.2 623.4) scale(21.60) rotate(30)"/><use href="#pointy8" fill="#f7dc12" color="#f7dc12" transform="translate(74.8 626.9) scale(15.50) rotate(0)"/><use href="#daisy" fill="#a0149b" color="#a0149b" transform="translate(102.5 628.0) scale(16.40) rotate(10)"/><use href="#out5" fill="#6bb6e0" color="#6bb6e0" transform="translate(255.8 629.8) scale(10.00) rotate(20)"/><use href="#green8" fill="#32a03c" color="#32a03c" transform="translate(275.4 624.0) scale(15.00) rotate(40)"/><use href="#daisy" fill="#a0149b" color="#a0149b" transform="translate(325.0 623.0) scale(16.40) rotate(15)"/><use href="#dark8" fill="#22581c" color="#22581c" transform="translate(360.4 618.0) scale(20.80) rotate(25)"/><use href="#dark8" fill="#22581c" color="#22581c" transform="translate(226.9 633.0) scale(21.00) rotate(30)"/><use href="#daisy" fill="#e2512e" color="#e2512e" transform="translate(191.0 636.0) scale(17.50) rotate(30)"/><use href="#pointy" fill="#8c8c87" color="#8c8c87" transform="translate(303.0 644.0) scale(16.00) rotate(50)"/><use href="#smallp" fill="#149f96" color="#149f96" transform="translate(266.5 646.2) scale(10.00) rotate(10)"/><use href="#pale" fill="#f2a5b0" color="#f2a5b0" transform="translate(250.1 648.4) scale(8.00) rotate(10)"/><use href="#pale" fill="#f2a5b0" color="#f2a5b0" transform="translate(116.5 647.6) scale(8.00) rotate(50)"/><use href="#tiny" fill="#9a9a90" color="#9a9a90" transform="translate(126.3 656.3) scale(5.00) rotate(50)"/><use href="#daisy" fill="#2a8458" color="#2a8458" transform="translate(89.6 650.5) scale(17.00) rotate(50)"/><use href="#five" fill="#e2512e" color="#e2512e" transform="translate(145.6 653.0) scale(15.90) rotate(50)"/><use href="#teal5" fill="#1eaa91" color="#1eaa91" transform="translate(178.3 660.0) scale(19.00) rotate(25)"/><use href="#lime" fill="#7dc030" color="#7dc030" transform="translate(212.0 657.0) scale(15.50) rotate(10)"/><use href="#out5" fill="#6bb6e0" color="#6bb6e0" transform="translate(280.8 654.6) scale(10.00) rotate(15)"/><use href="#smallp" fill="#149f96" color="#149f96" transform="translate(326.5 644.0) scale(10.50) rotate(10)"/><use href="#five" fill="#e2512e" color="#e2512e" transform="translate(349.2 642.5) scale(11.00) rotate(30)"/><use href="#smallp" fill="#ad4128" color="#ad4128" transform="translate(369.1 644.0) scale(11.00) rotate(25)"/><use href="#berry" fill="#d8288c" color="#d8288c" transform="translate(320.6 659.3) scale(7.80) rotate(50)"/><use href="#thin" fill="#ea9a84" color="#ea9a84" transform="translate(335.8 661.0) scale(11.00) rotate(15)"/><use href="#maroon" fill="#962846" color="#962846" transform="translate(369.2 662.8) scale(8.50) rotate(0)"/><use href="#five" fill="#e2512e" color="#e2512e" transform="translate(239.2 662.0) scale(11.00) rotate(20)"/><use href="#ring" fill="#50b0e6" color="#50b0e6" transform="translate(262.3 666.0) scale(12.70) rotate(30)"/><use href="#five" fill="#e2512e" color="#e2512e" transform="translate(290.6 671.9) scale(15.90) rotate(15)"/><use href="#gold" fill="#e8b014" color="#e8b014" transform="translate(108.5 670.7) scale(18.00) rotate(0)"/><use href="#berry" fill="#d8288c" color="#d8288c" transform="translate(135.0 673.6) scale(7.80) rotate(25)"/><use href="#outp" fill="#cf3a86" color="#cf3a86" transform="translate(155.2 673.6) scale(11.00) rotate(10)"/><use href="#lime" fill="#7dc030" color="#7dc030" transform="translate(358.8 680.0) scale(15.50) rotate(25)"/><use href="#star" fill="#8c1496" color="#8c1496" transform="translate(207.8 682.2) scale(15.00) rotate(30)"/><use href="#narrow8" fill="#dc6432" color="#dc6432" transform="translate(231.7 682.3) scale(17.00) rotate(15)"/><use href="#thin" fill="#ea9a84" color="#ea9a84" transform="translate(271.0 686.3) scale(12.00) rotate(30)"/><use href="#pointy8" fill="#f2aa96" color="#f2aa96" transform="translate(249.6 693.2) scale(14.00) rotate(20)"/><use href="#pale" fill="#f2a5b0" color="#f2a5b0" transform="translate(176.0 688.0) scale(8.50) rotate(30)"/><use href="#daisy" fill="#2a8458" color="#2a8458" transform="translate(322.2 690.0) scale(21.30) rotate(20)"/><use href="#five" fill="#e2512e" color="#e2512e" transform="translate(122.3 691.0) scale(10.50) rotate(20)"/><use href="#smallp" fill="#149f96" color="#149f96" transform="translate(192.5 696.3) scale(10.50) rotate(20)"/><use href="#ring" fill="#2d6ec8" color="#2d6ec8" transform="translate(150.0 697.3) scale(19.00) rotate(40)"/><use href="#pointy" fill="#8c8c87" color="#8c8c87" transform="translate(219.6 706.0) scale(16.00) rotate(20)"/><use href="#paddle8" fill="#b7b29c" color="#b7b29c" transform="translate(279.6 709.4) scale(21.00) rotate(20)"/><use href="#pointy8" fill="#f7dc12" color="#f7dc12" transform="translate(350.8 704.4) scale(15.00) rotate(50)"/><use href="#smallp" fill="#ad4128" color="#ad4128" transform="translate(307.2 713.8) scale(11.00) rotate(30)"/><use href="#daisy" fill="#e2512e" color="#e2512e" transform="translate(172.5 714.0) scale(15.50) rotate(0)"/><use href="#pointy8" fill="#f7dc12" color="#f7dc12" transform="translate(197.0 723.8) scale(15.00) rotate(0)"/><use href="#narrow8" fill="#d40f8c" color="#d40f8c" transform="translate(235.8 725.5) scale(15.00) rotate(25)"/><use href="#ring" fill="#50b0e6" color="#50b0e6" transform="translate(258.3 725.5) scale(12.50) rotate(50)"/><use href="#daisy" fill="#e2512e" color="#e2512e" transform="translate(324.0 727.0) scale(17.00) rotate(25)"/><use href="#maroon" fill="#962846" color="#962846" transform="translate(348.5 722.3) scale(8.50) rotate(20)"/><use href="#ring" fill="#2d6ec8" color="#2d6ec8" transform="translate(298.7 740.5) scale(18.50) rotate(30)"/><use href="#smallp" fill="#ad4128" color="#ad4128" transform="translate(213.8 740.5) scale(10.50) rotate(50)"/><use href="#olive" fill="#84844a" color="#84844a" transform="translate(232.9 748.0) scale(9.00) rotate(30)"/><use href="#pale" fill="#f2aa96" color="#f2aa96" transform="translate(246.7 750.0) scale(9.00) rotate(30)"/><use href="#green8" fill="#32a03c" color="#32a03c" transform="translate(255.4 746.3) scale(9.50) rotate(10)"/><use href="#out5" fill="#a9cfdc" color="#a9cfdc" transform="translate(272.0 754.4) scale(13.00) rotate(20)"/></svg>
<svg style="left:0;top:0" width="1920" height="1040" viewBox="0 0 1920 1040"><rect x="538.5" y="150.5" width="501" height="733" fill="none" stroke="#30334f" stroke-width="1"/><rect x="535.5" y="147.5" width="6" height="6" fill="none" stroke="#2a2c4c" stroke-width="1"/><rect x="535.5" y="514.5" width="6" height="6" fill="none" stroke="#2a2c4c" stroke-width="1"/><rect x="535.5" y="880.5" width="6" height="6" fill="none" stroke="#2a2c4c" stroke-width="1"/><rect x="786.5" y="147.5" width="6" height="6" fill="none" stroke="#2a2c4c" stroke-width="1"/><rect x="786.5" y="880.5" width="6" height="6" fill="none" stroke="#2a2c4c" stroke-width="1"/><rect x="1036.5" y="147.5" width="6" height="6" fill="none" stroke="#2a2c4c" stroke-width="1"/><rect x="1036.5" y="514.5" width="6" height="6" fill="none" stroke="#2a2c4c" stroke-width="1"/><rect x="1036.5" y="880.5" width="6" height="6" fill="none" stroke="#2a2c4c" stroke-width="1"/></svg>
</body></html>
